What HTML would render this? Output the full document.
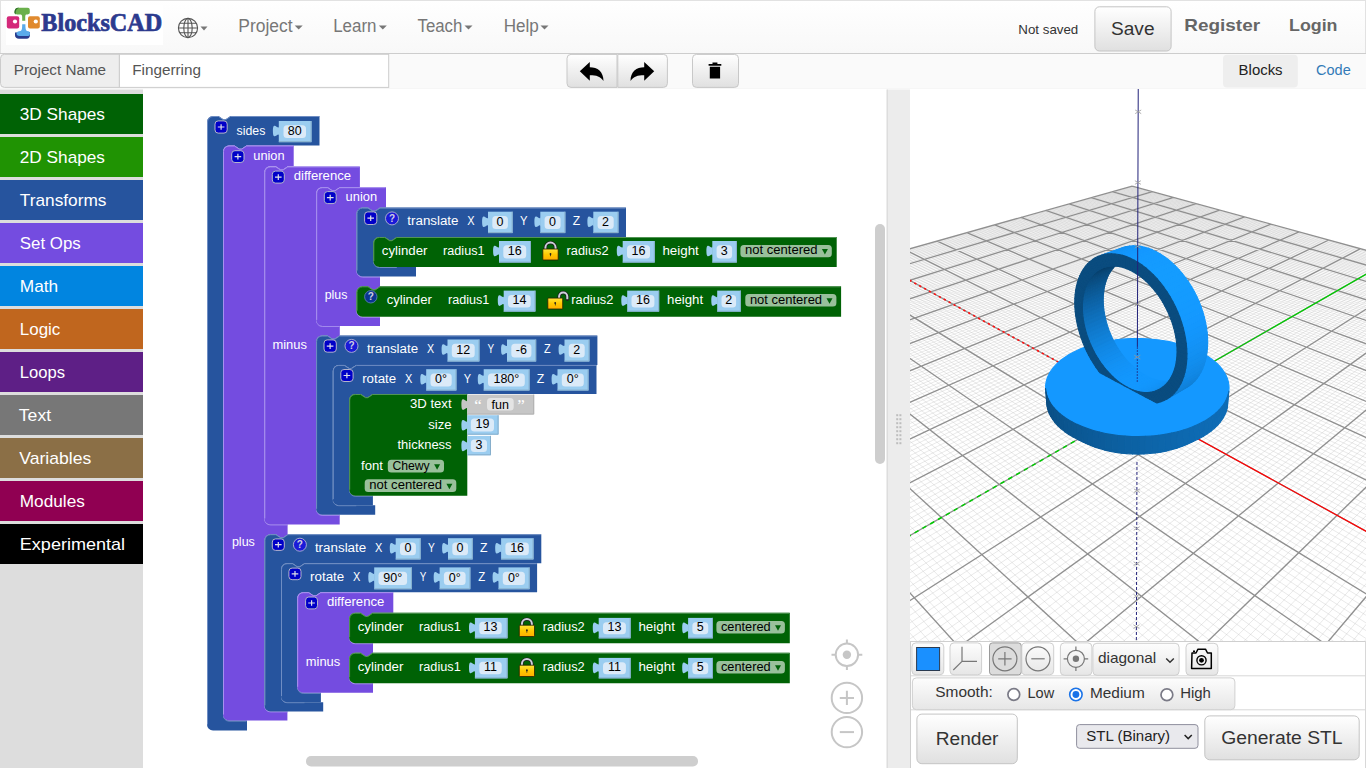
<!DOCTYPE html>
<html><head><meta charset="utf-8"><title>BlocksCAD</title>
<style>
html,body{margin:0;padding:0;width:1366px;height:768px;overflow:hidden;background:#fff;}
svg{display:block;font-family:"Liberation Sans",sans-serif;}
</style></head><body>
<svg width="1366" height="768" viewBox="0 0 1366 768">
<defs>
<linearGradient id="hdr" x1="0" y1="0" x2="0" y2="1"><stop offset="0" stop-color="#ffffff"/><stop offset="1" stop-color="#f8f8f8"/></linearGradient>
<linearGradient id="btn" x1="0" y1="0" x2="0" y2="1"><stop offset="0" stop-color="#ffffff"/><stop offset="1" stop-color="#e0e0e0"/></linearGradient>
<linearGradient id="btn2" x1="0" y1="0" x2="0" y2="1"><stop offset="0" stop-color="#fdfdfd"/><stop offset="1" stop-color="#e6e6e6"/></linearGradient>
<linearGradient id="gold" x1="0" y1="0" x2="0" y2="1"><stop offset="0" stop-color="#ffe63a"/><stop offset="0.5" stop-color="#ffc800"/><stop offset="1" stop-color="#ffae00"/></linearGradient>
</defs>

<rect x="0" y="0" width="1366" height="53" fill="url(#hdr)"/>
<rect x="0" y="0" width="1366" height="1" fill="#e2e2e2"/>
<rect x="0" y="0" width="1" height="53" fill="#e2e2e2"/>
<rect x="1365" y="0" width="1" height="53" fill="#e2e2e2"/>
<rect x="0" y="53" width="1366" height="1" fill="#cdcdcd"/>
<rect x="6" y="5" width="157" height="40" fill="#fff"/>
<path d="M14.5,13 C14.5,9 16,7.8 19,7.8 H27.5 C29.5,7.8 29.8,9 29.8,11 V12.5 C29.8,14 28.5,14.5 26,14.5 C25,15 25.3,17 25.3,20.8 H22.2 C22.2,17 22.5,15 21,14.5 C17,14.5 14.5,14.5 14.5,13 Z" fill="#6ab04c"/>
<path d="M14.5,13 C14.5,9 16,7.8 19,7.8 L17,9 C15.8,10 15.6,12 15.8,14 Z" fill="#2d6b2a"/>
<rect x="6.8" y="16.3" width="12.4" height="12.3" rx="2" fill="#d4297a"/><circle cx="15" cy="21.5" r="2.1" fill="#fff"/>
<rect x="28" y="16.3" width="11.8" height="12.3" rx="2" fill="#e08a2e"/><circle cx="35.8" cy="21.5" r="2.1" fill="#fff"/>
<path d="M15,32.5 V35 C15,37.5 16.5,38.7 19,38.7 H26.5 C29,38.7 30,37 30,34.5 V32 Z" fill="#283c8e"/>
<path d="M22.2,24.2 H25.4 C25.4,28 25.6,30.5 27,31 C29.5,31.3 30,32 30,33.5 C30,35.5 29,36 27,36 H19.5 C17.5,36 16.5,35 16.5,33.5 C16.5,31.8 18,31.2 20.5,31 C22,30.5 22.2,28 22.2,24.2 Z" fill="#5aabeb"/>
<text stroke="#2c3a8e" stroke-width="0.7" x="41.30" y="30.9" font-size="24.5" fill="#2c3a8e" font-weight="bold" font-family="Liberation Serif" textLength="120.91" lengthAdjust="spacingAndGlyphs">BlocksCAD</text>
<g stroke="#555" stroke-width="1.1" fill="none"><circle cx="188" cy="28" r="9.6"/><ellipse cx="188" cy="28" rx="4.2" ry="9.6"/><path d="M188,18.4V37.6M178.4,28H197.6M179.8,23.2H196.2M179.8,32.8H196.2"/></g>
<path d="M200.5,26.5H207.5L204.0,30.5Z" fill="#777"/>
<text x="238.30" y="32.0" font-size="17.5" fill="#777" font-weight="normal" font-family="Liberation Sans" textLength="54.24" lengthAdjust="spacingAndGlyphs">Project</text>
<path d="M294.7,25.5H302.7L298.7,29.5Z" fill="#777"/>
<text x="333.20" y="32.0" font-size="17.5" fill="#777" font-weight="normal" font-family="Liberation Sans" textLength="43.36" lengthAdjust="spacingAndGlyphs">Learn</text>
<path d="M378.8,25.5H386.8L382.8,29.5Z" fill="#777"/>
<text x="417.50" y="32.0" font-size="17.5" fill="#777" font-weight="normal" font-family="Liberation Sans" textLength="44.88" lengthAdjust="spacingAndGlyphs">Teach</text>
<path d="M464.5,25.5H472.5L468.5,29.5Z" fill="#777"/>
<text x="503.70" y="32.0" font-size="17.5" fill="#777" font-weight="normal" font-family="Liberation Sans" textLength="35.13" lengthAdjust="spacingAndGlyphs">Help</text>
<path d="M540.5,25.5H548.5L544.5,29.5Z" fill="#777"/>
<text x="1018.30" y="34.0" font-size="13.3" fill="#333" font-weight="normal" font-family="Liberation Sans" textLength="59.97" lengthAdjust="spacingAndGlyphs">Not saved</text>
<rect x="1094.9" y="6.8" width="76.2" height="44.2" rx="4.5" fill="url(#btn)" stroke="#c4c4c4" stroke-width="1"/>
<text x="1111.00" y="35.0" font-size="18.3" fill="#333" font-weight="normal" font-family="Liberation Sans" textLength="43.49" lengthAdjust="spacingAndGlyphs">Save</text>
<text x="1184.30" y="30.8" font-size="17" fill="#666" font-weight="bold" font-family="Liberation Sans" textLength="75.73" lengthAdjust="spacingAndGlyphs">Register</text>
<text x="1289.00" y="30.8" font-size="17" fill="#666" font-weight="bold" font-family="Liberation Sans" textLength="48.52" lengthAdjust="spacingAndGlyphs">Login</text>
<rect x="0" y="54" width="1366" height="35" fill="#fafafa"/>
<rect x="0" y="88" width="1366" height="1" fill="#f6f6f6"/>
<path d="M119.4,54.3 H4.5 A4,4 0 0,0 0.5,58.3 V83.4 A4,4 0 0,0 4.5,87.4 H119.4 Z" fill="#eee" stroke="#ccc" stroke-width="1"/>
<text x="13.80" y="74.8" font-size="14" fill="#555" font-weight="normal" font-family="Liberation Sans" textLength="92.27" lengthAdjust="spacingAndGlyphs">Project Name</text>
<rect x="119.4" y="54.3" width="269.3" height="33.1" fill="#fff" stroke="#ccc" stroke-width="1"/>
<text x="132.20" y="74.8" font-size="14" fill="#555" font-weight="normal" font-family="Liberation Sans" textLength="68.83" lengthAdjust="spacingAndGlyphs">Fingerring</text>
<path d="M571,54.4 H617 V87.4 H571 A4,4 0 0,1 567,83.4 V58.4 A4,4 0 0,1 571,54.4 Z" fill="url(#btn)" stroke="#c8c8c8" stroke-width="1"/>
<path d="M617.8,54.4 H663.4 A4,4 0 0,1 667.4,58.4 V83.4 A4,4 0 0,1 663.4,87.4 H617.8 Z" fill="url(#btn)" stroke="#c8c8c8" stroke-width="1"/>
<rect x="692.5" y="54.4" width="46" height="33" rx="4" fill="url(#btn)" stroke="#c8c8c8" stroke-width="1"/>
<path d="M579.8,71.2 L589.8,62 V67.2 C597.5,67.2 603.5,71.5 603.5,81 C600.5,76.5 596.5,75.3 589.8,75.3 V80.8 Z" fill="#000"/>
<path d="M654.2,71.2 L644.2,62 V67.2 C636.5,67.2 630.5,71.5 630.5,81 C633.5,76.5 637.5,75.3 644.2,75.3 V80.8 Z" fill="#000"/>
<path d="M708.6,64 H721.3 V65.8 H708.6 Z M712.5,62.6 H717.4 V64 H712.5 Z M709.8,66.8 H720.1 V78.5 H709.8 Z" fill="#000"/>
<rect x="1223" y="54.7" width="74.8" height="32.8" rx="4" fill="#eee"/>
<text x="1238.60" y="74.7" font-size="14.2" fill="#222" font-weight="normal" font-family="Liberation Sans" textLength="44.01" lengthAdjust="spacingAndGlyphs">Blocks</text>
<text x="1316.00" y="74.7" font-size="14.2" fill="#337ab7" font-weight="normal" font-family="Liberation Sans" textLength="34.71" lengthAdjust="spacingAndGlyphs">Code</text>
<rect x="0" y="89.5" width="143" height="678.5" fill="#ddd"/>
<rect x="0" y="94" width="143" height="40" fill="#006205"/>
<text x="19.80" y="119.6" font-size="17" fill="#fff" font-weight="normal" font-family="Liberation Sans" textLength="85.16" lengthAdjust="spacingAndGlyphs">3D Shapes</text>
<rect x="0" y="137" width="143" height="40" fill="#209303"/>
<text x="19.80" y="162.6" font-size="17" fill="#fff" font-weight="normal" font-family="Liberation Sans" textLength="85.16" lengthAdjust="spacingAndGlyphs">2D Shapes</text>
<rect x="0" y="180" width="143" height="40" fill="#26549e"/>
<text x="19.80" y="205.6" font-size="17" fill="#fff" font-weight="normal" font-family="Liberation Sans" textLength="86.69" lengthAdjust="spacingAndGlyphs">Transforms</text>
<rect x="0" y="223" width="143" height="40" fill="#744ce0"/>
<text x="19.80" y="248.6" font-size="17" fill="#fff" font-weight="normal" font-family="Liberation Sans" textLength="60.96" lengthAdjust="spacingAndGlyphs">Set Ops</text>
<rect x="0" y="266" width="143" height="40" fill="#0185e0"/>
<text x="19.80" y="291.6" font-size="17" fill="#fff" font-weight="normal" font-family="Liberation Sans" textLength="38.37" lengthAdjust="spacingAndGlyphs">Math</text>
<rect x="0" y="309" width="143" height="40" fill="#c0661e"/>
<text x="19.80" y="334.6" font-size="17" fill="#fff" font-weight="normal" font-family="Liberation Sans" textLength="40.51" lengthAdjust="spacingAndGlyphs">Logic</text>
<rect x="0" y="352" width="143" height="40" fill="#5e1f86"/>
<text x="19.80" y="377.6" font-size="17" fill="#fff" font-weight="normal" font-family="Liberation Sans" textLength="45.19" lengthAdjust="spacingAndGlyphs">Loops</text>
<rect x="0" y="395" width="143" height="40" fill="#777777"/>
<text x="18.80" y="420.6" font-size="17" fill="#fff" font-weight="normal" font-family="Liberation Sans" textLength="32.28" lengthAdjust="spacingAndGlyphs">Text</text>
<rect x="0" y="438" width="143" height="40" fill="#8b6f46"/>
<text x="19.30" y="463.6" font-size="17" fill="#fff" font-weight="normal" font-family="Liberation Sans" textLength="71.90" lengthAdjust="spacingAndGlyphs">Variables</text>
<rect x="0" y="481" width="143" height="40" fill="#900052"/>
<text x="19.80" y="506.6" font-size="17" fill="#fff" font-weight="normal" font-family="Liberation Sans" textLength="65.00" lengthAdjust="spacingAndGlyphs">Modules</text>
<rect x="0" y="524" width="143" height="40" fill="#000000"/>
<text x="19.80" y="549.6" font-size="17" fill="#fff" font-weight="normal" font-family="Liberation Sans" textLength="105.32" lengthAdjust="spacingAndGlyphs">Experimental</text>
<rect x="143" y="89.5" width="744" height="678.5" fill="#fff"/>
<path d="M207.0,122.0 A6.0,6.0 0 0,1 213.0,116.0 H218.5 l4.8,3.2 2.4,0 4.8,-3.2 H319.5 V145.5 H246.5 l-4.8,3.2 -2.4,0 -4.8,-3.2 H229.0 A6.0,6.0 0 0,0 223.0,151.5 V714.6 A6.0,6.0 0 0,0 229.0,720.6 H247.0 V730.6 H213.0 A6.0,6.0 0 0,1 207.0,724.6 Z" fill="#26549e"/>
<path d="M207.5,724.6 V122.0 A5.5,5.5 0 0,1 213.0,116.5 H218.5 l4.8,3.2 2.4,0 4.8,-3.2 H319.0" fill="none" stroke="#7893c6" stroke-width="1" opacity="0.9"/>
<path d="M223.5,714.6 A5.5,5.5 0 0,0 229.0,721.1 H246.5" fill="none" stroke="#7893c6" stroke-width="1" opacity="0.9"/>
<rect x="215.0" y="120.9" width="12.2" height="12.2" rx="3.2" fill="#0000c8" stroke="#b4b4cc" stroke-width="1"/>
<path d="M217.8,127.0H224.4M221.1,124.2V129.8" stroke="#e0e0e8" stroke-width="1.2"/>
<text x="236.60" y="135.0" font-size="12" fill="#fff" textLength="28.79" lengthAdjust="spacingAndGlyphs">sides</text>
<path d="M279.3,137.0 c0,-8 -6.4,6.4 -6.4,-6 s6.4,2 6.4,-6 Z" fill="#9bcdf0"/>
<rect x="278.8" y="121.0" width="32.8" height="21.2" fill="#9bcdf0"/>
<path d="M278.8,141.7H311.1V121.0" fill="none" stroke="#86aecb" stroke-width="1"/>
<rect x="283.5" y="125.2" width="22.5" height="12.7" rx="3.5" fill="#dbeaf8"/>
<text x="294.8" y="134.5" font-size="12.5" fill="#000" text-anchor="middle">80</text>
<path d="M223.0,151.5 A6.0,6.0 0 0,1 229.0,145.5 H234.5 l4.8,3.2 2.4,0 4.8,-3.2 H293.7 V166.3 H287.8 l-4.8,3.2 -2.4,0 -4.8,-3.2 H270.3 A6.0,6.0 0 0,0 264.3,172.3 V518.4 A6.0,6.0 0 0,0 270.3,524.4 H287.6 V534.2 H287.9 l-4.8,3.2 -2.4,0 -4.8,-3.2 H270.4 A6.0,6.0 0 0,0 264.4,540.2 V705.4 A6.0,6.0 0 0,0 270.4,711.4 H287.4 V720.6 H229.0 A6.0,6.0 0 0,1 223.0,714.6 Z" fill="#744ce0"/>
<path d="M223.5,714.6 V151.5 A5.5,5.5 0 0,1 229.0,146.0 H234.5 l4.8,3.2 2.4,0 4.8,-3.2 H293.2" fill="none" stroke="#ad98f0" stroke-width="1" opacity="0.9"/>
<path d="M264.8,518.4 A5.5,5.5 0 0,0 270.3,524.9 H287.8" fill="none" stroke="#ad98f0" stroke-width="1" opacity="0.9"/>
<path d="M264.9,705.4 A5.5,5.5 0 0,0 270.4,711.9 H287.9" fill="none" stroke="#ad98f0" stroke-width="1" opacity="0.9"/>
<rect x="231.7" y="150.7" width="12.3" height="11.8" rx="3.2" fill="#0000c8" stroke="#b4b4cc" stroke-width="1"/>
<path d="M234.6,156.6H241.2M237.9,153.8V159.4" stroke="#e0e0e8" stroke-width="1.2"/>
<text x="253.30" y="159.8" font-size="12" fill="#fff" textLength="31.32" lengthAdjust="spacingAndGlyphs">union</text>
<text x="231.90" y="546.3" font-size="12" fill="#fff" textLength="22.99" lengthAdjust="spacingAndGlyphs">plus</text>
<path d="M264.3,172.4 A6.0,6.0 0 0,1 270.3,166.4 H275.8 l4.8,3.2 2.4,0 4.8,-3.2 H359.9 V187.2 H339.7 l-4.8,3.2 -2.4,0 -4.8,-3.2 H322.2 A6.0,6.0 0 0,0 316.2,193.2 V319.9 A6.0,6.0 0 0,0 322.2,325.9 H339.8 V335.5 H339.6 l-4.8,3.2 -2.4,0 -4.8,-3.2 H322.1 A6.0,6.0 0 0,0 316.1,341.5 V508.8 A6.0,6.0 0 0,0 322.1,514.8 H339.7 V524.4 H270.3 A6.0,6.0 0 0,1 264.3,518.4 Z" fill="#744ce0"/>
<path d="M264.8,518.4 V172.4 A5.5,5.5 0 0,1 270.3,166.9 H275.8 l4.8,3.2 2.4,0 4.8,-3.2 H359.4" fill="none" stroke="#ad98f0" stroke-width="1" opacity="0.9"/>
<path d="M316.7,319.9 A5.5,5.5 0 0,0 322.2,326.4 H339.7" fill="none" stroke="#ad98f0" stroke-width="1" opacity="0.9"/>
<path d="M316.6,508.8 A5.5,5.5 0 0,0 322.1,515.3 H339.6" fill="none" stroke="#ad98f0" stroke-width="1" opacity="0.9"/>
<rect x="272.3" y="171.1" width="12.0" height="12.0" rx="3.2" fill="#0000c8" stroke="#b4b4cc" stroke-width="1"/>
<path d="M275.0,177.1H281.6M278.3,174.3V179.9" stroke="#e0e0e8" stroke-width="1.2"/>
<text x="293.70" y="179.8" font-size="12" fill="#fff" textLength="57.38" lengthAdjust="spacingAndGlyphs">difference</text>
<text x="272.40" y="348.7" font-size="12" fill="#fff" textLength="34.47" lengthAdjust="spacingAndGlyphs">minus</text>
<path d="M316.2,193.2 A6.0,6.0 0 0,1 322.2,187.2 H327.7 l4.8,3.2 2.4,0 4.8,-3.2 H386.0 V207.6 H380.0 l-4.8,3.2 -2.4,0 -4.8,-3.2 H362.5 A6.0,6.0 0 0,0 356.5,213.6 V270.6 A6.0,6.0 0 0,0 362.5,276.6 H380.0 V286.3 H380.0 l-4.8,3.2 -2.4,0 -4.8,-3.2 H362.5 A6.0,6.0 0 0,0 356.5,292.3 V310.8 A6.0,6.0 0 0,0 362.5,316.8 H380.0 V325.9 H322.2 A6.0,6.0 0 0,1 316.2,319.9 Z" fill="#744ce0"/>
<path d="M316.7,319.9 V193.2 A5.5,5.5 0 0,1 322.2,187.7 H327.7 l4.8,3.2 2.4,0 4.8,-3.2 H385.5" fill="none" stroke="#ad98f0" stroke-width="1" opacity="0.9"/>
<path d="M357.0,270.6 A5.5,5.5 0 0,0 362.5,277.1 H380.0" fill="none" stroke="#ad98f0" stroke-width="1" opacity="0.9"/>
<path d="M357.0,310.8 A5.5,5.5 0 0,0 362.5,317.3 H380.0" fill="none" stroke="#ad98f0" stroke-width="1" opacity="0.9"/>
<rect x="324.3" y="191.6" width="11.9" height="12.0" rx="3.2" fill="#0000c8" stroke="#b4b4cc" stroke-width="1"/>
<path d="M326.9,197.6H333.6M330.2,194.8V200.4" stroke="#e0e0e8" stroke-width="1.2"/>
<text x="345.60" y="200.8" font-size="12" fill="#fff" textLength="31.52" lengthAdjust="spacingAndGlyphs">union</text>
<text x="324.70" y="298.7" font-size="12" fill="#fff" textLength="22.69" lengthAdjust="spacingAndGlyphs">plus</text>
<path d="M356.5,213.6 A6.0,6.0 0 0,1 362.5,207.6 H368.0 l4.8,3.2 2.4,0 4.8,-3.2 H626.0 V237.0 H396.8 l-4.8,3.2 -2.4,0 -4.8,-3.2 H379.3 A6.0,6.0 0 0,0 373.3,243.0 V261.0 A6.0,6.0 0 0,0 379.3,267.0 H416.0 V276.6 H362.5 A6.0,6.0 0 0,1 356.5,270.6 Z" fill="#26549e"/>
<path d="M357.0,270.6 V213.6 A5.5,5.5 0 0,1 362.5,208.1 H368.0 l4.8,3.2 2.4,0 4.8,-3.2 H625.5" fill="none" stroke="#7893c6" stroke-width="1" opacity="0.9"/>
<path d="M373.8,261.0 A5.5,5.5 0 0,0 379.3,267.5 H396.8" fill="none" stroke="#7893c6" stroke-width="1" opacity="0.9"/>
<rect x="364.6" y="211.9" width="12.2" height="12.6" rx="3.2" fill="#0000c8" stroke="#b4b4cc" stroke-width="1"/>
<path d="M367.4,218.2H374.0M370.7,215.4V221.0" stroke="#e0e0e8" stroke-width="1.2"/>
<circle cx="392.0" cy="218.4" r="6.5" fill="#1a1ad8" stroke="#b4b4d4" stroke-width="0.9"/>
<text x="392.0" y="221.9" font-size="10" font-weight="bold" fill="#d0d0e0" text-anchor="middle">?</text>
<text x="407.30" y="225.4" font-size="12" fill="#fff" textLength="51.21" lengthAdjust="spacingAndGlyphs">translate</text>
<text x="467.30" y="225.4" font-size="12" fill="#fff" textLength="7.32" lengthAdjust="spacingAndGlyphs">X</text>
<path d="M488.5,227.7 c0,-8 -6.4,6.4 -6.4,-6 s6.4,2 6.4,-6 Z" fill="#9bcdf0"/>
<rect x="488.0" y="211.7" width="24.7" height="21.4" fill="#9bcdf0"/>
<path d="M488.0,232.6H512.2V211.7" fill="none" stroke="#86aecb" stroke-width="1"/>
<rect x="492.3" y="216.0" width="15.6" height="12.9" rx="3.5" fill="#dbeaf8"/>
<text x="500.1" y="225.5" font-size="12.5" fill="#000" text-anchor="middle">0</text>
<text x="520.00" y="225.4" font-size="12" fill="#fff" textLength="7.52" lengthAdjust="spacingAndGlyphs">Y</text>
<path d="M540.8,227.7 c0,-8 -6.4,6.4 -6.4,-6 s6.4,2 6.4,-6 Z" fill="#9bcdf0"/>
<rect x="540.3" y="211.7" width="25.1" height="21.4" fill="#9bcdf0"/>
<path d="M540.3,232.6H564.9V211.7" fill="none" stroke="#86aecb" stroke-width="1"/>
<rect x="544.6" y="216.0" width="16.0" height="12.9" rx="3.5" fill="#dbeaf8"/>
<text x="552.6" y="225.5" font-size="12.5" fill="#000" text-anchor="middle">0</text>
<text x="572.80" y="225.4" font-size="12" fill="#fff" textLength="7.41" lengthAdjust="spacingAndGlyphs">Z</text>
<path d="M593.8,227.7 c0,-8 -6.4,6.4 -6.4,-6 s6.4,2 6.4,-6 Z" fill="#9bcdf0"/>
<rect x="593.3" y="211.7" width="25.2" height="21.4" fill="#9bcdf0"/>
<path d="M593.3,232.6H618.0V211.7" fill="none" stroke="#86aecb" stroke-width="1"/>
<rect x="597.6" y="216.0" width="16.1" height="12.9" rx="3.5" fill="#dbeaf8"/>
<text x="605.6" y="225.5" font-size="12.5" fill="#000" text-anchor="middle">2</text>
<path d="M373.3,243.0 A6.0,6.0 0 0,1 379.3,237.0 H384.8 l4.8,3.2 2.4,0 4.8,-3.2 H836.7 V267.0 H379.3 A6.0,6.0 0 0,1 373.3,261.0 Z" fill="#006205"/>
<path d="M373.8,261.0 V243.0 A5.5,5.5 0 0,1 379.3,237.5 H384.8 l4.8,3.2 2.4,0 4.8,-3.2 H836.2" fill="none" stroke="#5b9a5e" stroke-width="1" opacity="0.9"/>
<text x="381.80" y="254.9" font-size="12" fill="#fff" textLength="45.61" lengthAdjust="spacingAndGlyphs">cylinder</text>
<text x="443.10" y="254.9" font-size="12" fill="#fff" textLength="41.40" lengthAdjust="spacingAndGlyphs">radius1</text>
<path d="M499.5,257.0 c0,-8 -6.4,6.4 -6.4,-6 s6.4,2 6.4,-6 Z" fill="#9bcdf0"/>
<rect x="499.0" y="241.0" width="32.0" height="21.6" fill="#9bcdf0"/>
<path d="M499.0,262.1H530.5V241.0" fill="none" stroke="#86aecb" stroke-width="1"/>
<rect x="503.3" y="245.3" width="22.9" height="13.1" rx="3.5" fill="#dbeaf8"/>
<text x="514.8" y="255.0" font-size="12.5" fill="#000" text-anchor="middle">16</text>
<path d="M545.4,250.0 V247.7 A5.1,5.1 0 0,1 555.6,247.7 V250.0" fill="none" stroke="#1e1e1e" stroke-width="3.4" stroke-linecap="round"/>
<path d="M545.4,250.0 V247.7 A5.1,5.1 0 0,1 555.6,247.7 V250.0" fill="none" stroke="#cfd0dc" stroke-width="2"/>
<rect x="542.8" y="249.0" width="15.4" height="11.0" rx="0.8" fill="url(#gold)" stroke="#2a1e00" stroke-width="0.8"/>
<circle cx="550.5" cy="253.9" r="0.9" fill="#222"/><path d="M550.0,254.0h1l-0.2,2.3h-0.6z" fill="#222"/>
<text x="566.60" y="254.9" font-size="12" fill="#fff" textLength="41.90" lengthAdjust="spacingAndGlyphs">radius2</text>
<path d="M623.2,257.0 c0,-8 -6.4,6.4 -6.4,-6 s6.4,2 6.4,-6 Z" fill="#9bcdf0"/>
<rect x="622.7" y="241.0" width="32.1" height="21.6" fill="#9bcdf0"/>
<path d="M622.7,262.1H654.3V241.0" fill="none" stroke="#86aecb" stroke-width="1"/>
<rect x="627.0" y="245.3" width="23.0" height="13.1" rx="3.5" fill="#dbeaf8"/>
<text x="638.5" y="255.0" font-size="12.5" fill="#000" text-anchor="middle">16</text>
<text x="662.40" y="254.9" font-size="12" fill="#fff" textLength="36.40" lengthAdjust="spacingAndGlyphs">height</text>
<path d="M712.8,257.0 c0,-8 -6.4,6.4 -6.4,-6 s6.4,2 6.4,-6 Z" fill="#9bcdf0"/>
<rect x="712.3" y="241.0" width="24.6" height="21.6" fill="#9bcdf0"/>
<path d="M712.3,262.1H736.4V241.0" fill="none" stroke="#86aecb" stroke-width="1"/>
<rect x="716.6" y="245.3" width="15.5" height="13.1" rx="3.5" fill="#dbeaf8"/>
<text x="724.3" y="255.0" font-size="12.5" fill="#000" text-anchor="middle">3</text>
<rect x="740.4" y="245.0" width="91.4" height="12.2" rx="3.5" fill="#99c09b"/>
<text x="745.00" y="254.3" font-size="12.5" fill="#000" textLength="72.50" lengthAdjust="spacingAndGlyphs">not centered</text>
<path d="M821.9,249.1H827.9L824.9,254.6Z" fill="#00620a"/>
<path d="M356.5,292.3 A6.0,6.0 0 0,1 362.5,286.3 H368.0 l4.8,3.2 2.4,0 4.8,-3.2 H841.1 V316.7 H362.5 A6.0,6.0 0 0,1 356.5,310.7 Z" fill="#006205"/>
<path d="M357.0,310.7 V292.3 A5.5,5.5 0 0,1 362.5,286.8 H368.0 l4.8,3.2 2.4,0 4.8,-3.2 H840.6" fill="none" stroke="#5b9a5e" stroke-width="1" opacity="0.9"/>
<circle cx="370.8" cy="296.8" r="6.2" fill="#0a3592" stroke="#5a7fb0" stroke-width="0.9"/>
<text x="370.8" y="300.3" font-size="10" font-weight="bold" fill="#d0d0e0" text-anchor="middle">?</text>
<text x="386.70" y="304.3" font-size="12" fill="#fff" textLength="45.11" lengthAdjust="spacingAndGlyphs">cylinder</text>
<text x="448.00" y="304.3" font-size="12" fill="#fff" textLength="41.30" lengthAdjust="spacingAndGlyphs">radius1</text>
<path d="M504.2,306.6 c0,-8 -6.4,6.4 -6.4,-6 s6.4,2 6.4,-6 Z" fill="#9bcdf0"/>
<rect x="503.7" y="290.6" width="31.8" height="21.1" fill="#9bcdf0"/>
<path d="M503.7,311.2H535.0V290.6" fill="none" stroke="#86aecb" stroke-width="1"/>
<rect x="508.0" y="294.9" width="22.7" height="12.6" rx="3.5" fill="#dbeaf8"/>
<text x="519.4" y="304.1" font-size="12.5" fill="#000" text-anchor="middle">14</text>
<path d="M559.1,299.1 V296.6 A4.1,4.1 0 0,1 567.3,296.6 V299.2" fill="none" stroke="#1e1e1e" stroke-width="3.4" stroke-linecap="round"/>
<path d="M559.1,299.1 V296.6 A4.1,4.1 0 0,1 567.3,296.6 V299.2" fill="none" stroke="#cfd0dc" stroke-width="2"/>
<rect x="547.8" y="298.1" width="14.9" height="10.9" rx="0.8" fill="url(#gold)" stroke="#2a1e00" stroke-width="0.8"/>
<circle cx="555.2" cy="302.9" r="0.9" fill="#222"/><path d="M554.8,303.1h1l-0.2,2.3h-0.6z" fill="#222"/>
<text x="571.30" y="304.3" font-size="12" fill="#fff" textLength="42.00" lengthAdjust="spacingAndGlyphs">radius2</text>
<path d="M627.7,306.6 c0,-8 -6.4,6.4 -6.4,-6 s6.4,2 6.4,-6 Z" fill="#9bcdf0"/>
<rect x="627.2" y="290.6" width="32.0" height="21.1" fill="#9bcdf0"/>
<path d="M627.2,311.2H658.7V290.6" fill="none" stroke="#86aecb" stroke-width="1"/>
<rect x="631.5" y="294.9" width="22.9" height="12.6" rx="3.5" fill="#dbeaf8"/>
<text x="643.0" y="304.1" font-size="12.5" fill="#000" text-anchor="middle">16</text>
<text x="667.10" y="304.3" font-size="12" fill="#fff" textLength="36.00" lengthAdjust="spacingAndGlyphs">height</text>
<path d="M717.7,306.6 c0,-8 -6.4,6.4 -6.4,-6 s6.4,2 6.4,-6 Z" fill="#9bcdf0"/>
<rect x="717.2" y="290.6" width="23.7" height="21.1" fill="#9bcdf0"/>
<path d="M717.2,311.2H740.4V290.6" fill="none" stroke="#86aecb" stroke-width="1"/>
<rect x="721.5" y="294.9" width="14.6" height="12.6" rx="3.5" fill="#dbeaf8"/>
<text x="728.8" y="304.1" font-size="12.5" fill="#000" text-anchor="middle">2</text>
<rect x="745.3" y="294.1" width="91.1" height="12.4" rx="3.5" fill="#99c09b"/>
<text x="749.90" y="303.6" font-size="12.5" fill="#000" textLength="72.20" lengthAdjust="spacingAndGlyphs">not centered</text>
<path d="M826.5,298.3H832.5L829.5,303.8Z" fill="#00620a"/>
<path d="M316.1,341.5 A6.0,6.0 0 0,1 322.1,335.5 H327.6 l4.8,3.2 2.4,0 4.8,-3.2 H597.4 V364.9 H356.3 l-4.8,3.2 -2.4,0 -4.8,-3.2 H338.8 A6.0,6.0 0 0,0 332.8,370.9 V499.2 A6.0,6.0 0 0,0 338.8,505.2 H375.2 V514.8 H322.1 A6.0,6.0 0 0,1 316.1,508.8 Z" fill="#26549e"/>
<path d="M316.6,508.8 V341.5 A5.5,5.5 0 0,1 322.1,336.0 H327.6 l4.8,3.2 2.4,0 4.8,-3.2 H596.9" fill="none" stroke="#7893c6" stroke-width="1" opacity="0.9"/>
<path d="M333.3,499.2 A5.5,5.5 0 0,0 338.8,505.7 H356.3" fill="none" stroke="#7893c6" stroke-width="1" opacity="0.9"/>
<rect x="324.0" y="339.9" width="12.3" height="12.3" rx="3.2" fill="#0000c8" stroke="#b4b4cc" stroke-width="1"/>
<path d="M326.8,346.1H333.4M330.1,343.2V348.9" stroke="#e0e0e8" stroke-width="1.2"/>
<circle cx="351.5" cy="345.9" r="6.5" fill="#1a1ad8" stroke="#b4b4d4" stroke-width="0.9"/>
<text x="351.5" y="349.4" font-size="10" font-weight="bold" fill="#d0d0e0" text-anchor="middle">?</text>
<text x="366.90" y="353.1" font-size="12" fill="#fff" textLength="51.21" lengthAdjust="spacingAndGlyphs">translate</text>
<text x="426.90" y="353.1" font-size="12" fill="#fff" textLength="7.12" lengthAdjust="spacingAndGlyphs">X</text>
<path d="M448.0,355.5 c0,-8 -6.4,6.4 -6.4,-6 s6.4,2 6.4,-6 Z" fill="#9bcdf0"/>
<rect x="447.5" y="339.5" width="32.0" height="22.1" fill="#9bcdf0"/>
<path d="M447.5,361.1H479.0V339.5" fill="none" stroke="#86aecb" stroke-width="1"/>
<rect x="451.8" y="343.8" width="22.9" height="13.6" rx="3.5" fill="#dbeaf8"/>
<text x="463.2" y="354.0" font-size="12.5" fill="#000" text-anchor="middle">12</text>
<text x="487.40" y="353.1" font-size="12" fill="#fff" textLength="6.62" lengthAdjust="spacingAndGlyphs">Y</text>
<path d="M507.5,355.5 c0,-8 -6.4,6.4 -6.4,-6 s6.4,2 6.4,-6 Z" fill="#9bcdf0"/>
<rect x="507.0" y="339.5" width="29.2" height="22.1" fill="#9bcdf0"/>
<path d="M507.0,361.1H535.7V339.5" fill="none" stroke="#86aecb" stroke-width="1"/>
<rect x="511.3" y="343.8" width="20.1" height="13.6" rx="3.5" fill="#dbeaf8"/>
<text x="521.4" y="354.0" font-size="12.5" fill="#000" text-anchor="middle">-6</text>
<text x="544.00" y="353.1" font-size="12" fill="#fff" textLength="6.71" lengthAdjust="spacingAndGlyphs">Z</text>
<path d="M565.0,355.5 c0,-8 -6.4,6.4 -6.4,-6 s6.4,2 6.4,-6 Z" fill="#9bcdf0"/>
<rect x="564.5" y="339.5" width="25.0" height="22.1" fill="#9bcdf0"/>
<path d="M564.5,361.1H589.0V339.5" fill="none" stroke="#86aecb" stroke-width="1"/>
<rect x="568.8" y="343.8" width="15.9" height="13.6" rx="3.5" fill="#dbeaf8"/>
<text x="576.8" y="354.0" font-size="12.5" fill="#000" text-anchor="middle">2</text>
<path d="M332.8,370.9 A6.0,6.0 0 0,1 338.8,364.9 H344.3 l4.8,3.2 2.4,0 4.8,-3.2 H596.5 V394.0 H372.7 l-4.8,3.2 -2.4,0 -4.8,-3.2 H355.2 A6.0,6.0 0 0,0 349.2,400.0 V489.7 A6.0,6.0 0 0,0 355.2,495.7 H372.9 V505.2 H338.8 A6.0,6.0 0 0,1 332.8,499.2 Z" fill="#26549e"/>
<path d="M333.3,499.2 V370.9 A5.5,5.5 0 0,1 338.8,365.4 H344.3 l4.8,3.2 2.4,0 4.8,-3.2 H596.0" fill="none" stroke="#7893c6" stroke-width="1" opacity="0.9"/>
<path d="M349.7,489.7 A5.5,5.5 0 0,0 355.2,496.2 H372.7" fill="none" stroke="#7893c6" stroke-width="1" opacity="0.9"/>
<rect x="340.8" y="369.5" width="12.3" height="12.0" rx="3.2" fill="#0000c8" stroke="#b4b4cc" stroke-width="1"/>
<path d="M343.6,375.5H350.2M346.9,372.7V378.3" stroke="#e0e0e8" stroke-width="1.2"/>
<text x="362.20" y="382.9" font-size="12" fill="#fff" textLength="34.03" lengthAdjust="spacingAndGlyphs">rotate</text>
<text x="405.00" y="382.9" font-size="12" fill="#fff" textLength="7.32" lengthAdjust="spacingAndGlyphs">X</text>
<path d="M426.7,385.2 c0,-8 -6.4,6.4 -6.4,-6 s6.4,2 6.4,-6 Z" fill="#9bcdf0"/>
<rect x="426.2" y="369.2" width="30.3" height="21.4" fill="#9bcdf0"/>
<path d="M426.2,390.1H456.0V369.2" fill="none" stroke="#86aecb" stroke-width="1"/>
<rect x="430.5" y="373.5" width="21.2" height="12.9" rx="3.5" fill="#dbeaf8"/>
<text x="441.1" y="383.0" font-size="12.5" fill="#000" text-anchor="middle">0°</text>
<text x="463.70" y="382.9" font-size="12" fill="#fff" textLength="7.32" lengthAdjust="spacingAndGlyphs">Y</text>
<path d="M484.2,385.2 c0,-8 -6.4,6.4 -6.4,-6 s6.4,2 6.4,-6 Z" fill="#9bcdf0"/>
<rect x="483.7" y="369.2" width="45.9" height="21.4" fill="#9bcdf0"/>
<path d="M483.7,390.1H529.1V369.2" fill="none" stroke="#86aecb" stroke-width="1"/>
<rect x="488.0" y="373.5" width="36.8" height="12.9" rx="3.5" fill="#dbeaf8"/>
<text x="506.4" y="383.0" font-size="12.5" fill="#000" text-anchor="middle">180°</text>
<text x="536.80" y="382.9" font-size="12" fill="#fff" textLength="7.51" lengthAdjust="spacingAndGlyphs">Z</text>
<path d="M558.0,385.2 c0,-8 -6.4,6.4 -6.4,-6 s6.4,2 6.4,-6 Z" fill="#9bcdf0"/>
<rect x="557.5" y="369.2" width="31.1" height="21.4" fill="#9bcdf0"/>
<path d="M557.5,390.1H588.1V369.2" fill="none" stroke="#86aecb" stroke-width="1"/>
<rect x="561.8" y="373.5" width="22.0" height="12.9" rx="3.5" fill="#dbeaf8"/>
<text x="572.8" y="383.0" font-size="12.5" fill="#000" text-anchor="middle">0°</text>
<path d="M349.2,400.0 A6.0,6.0 0 0,1 355.2,394.0 H360.7 l4.8,3.2 2.4,0 4.8,-3.2 H467.3 V495.7 H355.2 A6.0,6.0 0 0,1 349.2,489.7 Z" fill="#006205"/>
<path d="M349.7,489.7 V400.0 A5.5,5.5 0 0,1 355.2,394.5 H360.7 l4.8,3.2 2.4,0 4.8,-3.2 H466.8" fill="none" stroke="#5b9a5e" stroke-width="1" opacity="0.9"/>
<text x="410.00" y="407.9" font-size="12" fill="#fff" textLength="41.57" lengthAdjust="spacingAndGlyphs">3D text</text>
<path d="M467.8,410.6 c0,-8 -6.4,6.4 -6.4,-6 s6.4,2 6.4,-6 Z" fill="#c6c6c6"/>
<rect x="467.3" y="394.6" width="66.9" height="19.8" fill="#c6c6c6"/>
<path d="M467.3,414.1H533.7V394.6" fill="none" stroke="#b0b0b0" stroke-width="1"/>
<text x="474.3" y="411" font-size="17" fill="#fff" font-family="Liberation Serif">“</text>
<rect x="487" y="398" width="26.7" height="12.5" rx="3.5" fill="#e4e4e4"/>
<text x="500.3" y="408.6" font-size="12.5" fill="#000" text-anchor="middle">fun</text>
<text x="517.2" y="411" font-size="17" fill="#fff" font-family="Liberation Serif">”</text>
<text x="428.20" y="428.6" font-size="12" fill="#fff" textLength="23.38" lengthAdjust="spacingAndGlyphs">size</text>
<path d="M467.8,431.2 c0,-8 -6.4,6.4 -6.4,-6 s6.4,2 6.4,-6 Z" fill="#9bcdf0"/>
<rect x="467.3" y="415.2" width="31.3" height="19.5" fill="#9bcdf0"/>
<path d="M467.3,434.2H498.1V415.2" fill="none" stroke="#86aecb" stroke-width="1"/>
<rect x="470.9" y="418.5" width="23.1" height="13.0" rx="3.5" fill="#dbeaf8"/>
<text x="482.4" y="428.1" font-size="12.5" fill="#000" text-anchor="middle">19</text>
<text x="397.50" y="448.7" font-size="12" fill="#fff" textLength="54.08" lengthAdjust="spacingAndGlyphs">thickness</text>
<path d="M467.8,451.9 c0,-8 -6.4,6.4 -6.4,-6 s6.4,2 6.4,-6 Z" fill="#9bcdf0"/>
<rect x="467.3" y="435.9" width="23.7" height="19.4" fill="#9bcdf0"/>
<path d="M467.3,454.8H490.5V435.9" fill="none" stroke="#86aecb" stroke-width="1"/>
<rect x="470.9" y="439.5" width="16.1" height="12.5" rx="3.5" fill="#dbeaf8"/>
<text x="478.9" y="448.6" font-size="12.5" fill="#000" text-anchor="middle">3</text>
<text x="361.00" y="469.7" font-size="12" fill="#fff" textLength="21.87" lengthAdjust="spacingAndGlyphs">font</text>
<rect x="387.8" y="459.8" width="56.2" height="12.8" rx="3.5" fill="#99c09b"/>
<text x="392.40" y="469.7" font-size="12.5" fill="#000" textLength="37.32" lengthAdjust="spacingAndGlyphs">Chewy</text>
<path d="M434.1,464.2H440.1L437.1,469.7Z" fill="#00620a"/>
<rect x="364.7" y="479.3" width="91.6" height="12.8" rx="3.5" fill="#99c09b"/>
<text x="369.30" y="489.2" font-size="12.5" fill="#000" textLength="72.70" lengthAdjust="spacingAndGlyphs">not centered</text>
<path d="M446.4,483.7H452.4L449.4,489.2Z" fill="#00620a"/>
<path d="M264.4,540.2 A6.0,6.0 0 0,1 270.4,534.2 H275.9 l4.8,3.2 2.4,0 4.8,-3.2 H541.3 V563.2 H304.5 l-4.8,3.2 -2.4,0 -4.8,-3.2 H287.0 A6.0,6.0 0 0,0 281.0,569.2 V696.2 A6.0,6.0 0 0,0 287.0,702.2 H323.2 V711.4 H270.4 A6.0,6.0 0 0,1 264.4,705.4 Z" fill="#26549e"/>
<path d="M264.9,705.4 V540.2 A5.5,5.5 0 0,1 270.4,534.7 H275.9 l4.8,3.2 2.4,0 4.8,-3.2 H540.8" fill="none" stroke="#7893c6" stroke-width="1" opacity="0.9"/>
<path d="M281.5,696.2 A5.5,5.5 0 0,0 287.0,702.7 H304.5" fill="none" stroke="#7893c6" stroke-width="1" opacity="0.9"/>
<rect x="272.3" y="538.9" width="12.0" height="11.5" rx="3.2" fill="#0000c8" stroke="#b4b4cc" stroke-width="1"/>
<path d="M275.0,544.7H281.6M278.3,541.9V547.5" stroke="#e0e0e8" stroke-width="1.2"/>
<circle cx="299.9" cy="544.7" r="6.5" fill="#1a1ad8" stroke="#b4b4d4" stroke-width="0.9"/>
<text x="299.9" y="548.2" font-size="10" font-weight="bold" fill="#d0d0e0" text-anchor="middle">?</text>
<text x="314.90" y="551.9" font-size="12" fill="#fff" textLength="51.31" lengthAdjust="spacingAndGlyphs">translate</text>
<text x="375.00" y="551.9" font-size="12" fill="#fff" textLength="7.32" lengthAdjust="spacingAndGlyphs">X</text>
<path d="M396.2,554.2 c0,-8 -6.4,6.4 -6.4,-6 s6.4,2 6.4,-6 Z" fill="#9bcdf0"/>
<rect x="395.7" y="538.2" width="25.0" height="21.3" fill="#9bcdf0"/>
<path d="M395.7,559.0H420.2V538.2" fill="none" stroke="#86aecb" stroke-width="1"/>
<rect x="400.0" y="542.5" width="15.9" height="12.8" rx="3.5" fill="#dbeaf8"/>
<text x="407.9" y="551.9" font-size="12.5" fill="#000" text-anchor="middle">0</text>
<text x="428.00" y="551.9" font-size="12" fill="#fff" textLength="6.82" lengthAdjust="spacingAndGlyphs">Y</text>
<path d="M448.5,554.2 c0,-8 -6.4,6.4 -6.4,-6 s6.4,2 6.4,-6 Z" fill="#9bcdf0"/>
<rect x="448.0" y="538.2" width="24.8" height="21.3" fill="#9bcdf0"/>
<path d="M448.0,559.0H472.3V538.2" fill="none" stroke="#86aecb" stroke-width="1"/>
<rect x="452.3" y="542.5" width="15.7" height="12.8" rx="3.5" fill="#dbeaf8"/>
<text x="460.1" y="551.9" font-size="12.5" fill="#000" text-anchor="middle">0</text>
<text x="480.00" y="551.9" font-size="12" fill="#fff" textLength="7.51" lengthAdjust="spacingAndGlyphs">Z</text>
<path d="M501.6,554.2 c0,-8 -6.4,6.4 -6.4,-6 s6.4,2 6.4,-6 Z" fill="#9bcdf0"/>
<rect x="501.1" y="538.2" width="32.5" height="21.3" fill="#9bcdf0"/>
<path d="M501.1,559.0H533.1V538.2" fill="none" stroke="#86aecb" stroke-width="1"/>
<rect x="505.4" y="542.5" width="23.4" height="12.8" rx="3.5" fill="#dbeaf8"/>
<text x="517.1" y="551.9" font-size="12.5" fill="#000" text-anchor="middle">16</text>
<path d="M281.0,569.2 A6.0,6.0 0 0,1 287.0,563.2 H292.5 l4.8,3.2 2.4,0 4.8,-3.2 H537.1 V592.2 H320.7 l-4.8,3.2 -2.4,0 -4.8,-3.2 H303.2 A6.0,6.0 0 0,0 297.2,598.2 V686.8 A6.0,6.0 0 0,0 303.2,692.8 H320.9 V702.2 H287.0 A6.0,6.0 0 0,1 281.0,696.2 Z" fill="#26549e"/>
<path d="M281.5,696.2 V569.2 A5.5,5.5 0 0,1 287.0,563.7 H292.5 l4.8,3.2 2.4,0 4.8,-3.2 H536.6" fill="none" stroke="#7893c6" stroke-width="1" opacity="0.9"/>
<path d="M297.7,686.8 A5.5,5.5 0 0,0 303.2,693.3 H320.7" fill="none" stroke="#7893c6" stroke-width="1" opacity="0.9"/>
<rect x="288.9" y="568.1" width="12.1" height="11.6" rx="3.2" fill="#0000c8" stroke="#b4b4cc" stroke-width="1"/>
<path d="M291.7,573.9H298.3M295.0,571.1V576.7" stroke="#e0e0e8" stroke-width="1.2"/>
<text x="310.10" y="581.1" font-size="12" fill="#fff" textLength="34.13" lengthAdjust="spacingAndGlyphs">rotate</text>
<text x="353.00" y="581.1" font-size="12" fill="#fff" textLength="7.32" lengthAdjust="spacingAndGlyphs">X</text>
<path d="M374.7,583.4 c0,-8 -6.4,6.4 -6.4,-6 s6.4,2 6.4,-6 Z" fill="#9bcdf0"/>
<rect x="374.2" y="567.4" width="37.7" height="21.9" fill="#9bcdf0"/>
<path d="M374.2,588.8H411.4V567.4" fill="none" stroke="#86aecb" stroke-width="1"/>
<rect x="378.5" y="571.7" width="28.6" height="13.4" rx="3.5" fill="#dbeaf8"/>
<text x="392.8" y="581.7" font-size="12.5" fill="#000" text-anchor="middle">90°</text>
<text x="419.80" y="581.1" font-size="12" fill="#fff" textLength="6.62" lengthAdjust="spacingAndGlyphs">Y</text>
<path d="M440.1,583.4 c0,-8 -6.4,6.4 -6.4,-6 s6.4,2 6.4,-6 Z" fill="#9bcdf0"/>
<rect x="439.6" y="567.4" width="30.8" height="21.9" fill="#9bcdf0"/>
<path d="M439.6,588.8H469.9V567.4" fill="none" stroke="#86aecb" stroke-width="1"/>
<rect x="443.9" y="571.7" width="21.7" height="13.4" rx="3.5" fill="#dbeaf8"/>
<text x="454.8" y="581.7" font-size="12.5" fill="#000" text-anchor="middle">0°</text>
<text x="478.30" y="581.1" font-size="12" fill="#fff" textLength="7.01" lengthAdjust="spacingAndGlyphs">Z</text>
<path d="M499.0,583.4 c0,-8 -6.4,6.4 -6.4,-6 s6.4,2 6.4,-6 Z" fill="#9bcdf0"/>
<rect x="498.5" y="567.4" width="31.2" height="21.9" fill="#9bcdf0"/>
<path d="M498.5,588.8H529.2V567.4" fill="none" stroke="#86aecb" stroke-width="1"/>
<rect x="502.8" y="571.7" width="22.1" height="13.4" rx="3.5" fill="#dbeaf8"/>
<text x="513.9" y="581.7" font-size="12.5" fill="#000" text-anchor="middle">0°</text>
<path d="M297.2,598.2 A6.0,6.0 0 0,1 303.2,592.2 H308.7 l4.8,3.2 2.4,0 4.8,-3.2 H393.3 V612.8 H372.6 l-4.8,3.2 -2.4,0 -4.8,-3.2 H355.1 A6.0,6.0 0 0,0 349.1,618.8 V637.2 A6.0,6.0 0 0,0 355.1,643.2 H373.0 V652.8 H372.6 l-4.8,3.2 -2.4,0 -4.8,-3.2 H355.1 A6.0,6.0 0 0,0 349.1,658.8 V677.3 A6.0,6.0 0 0,0 355.1,683.3 H373.0 V692.8 H303.2 A6.0,6.0 0 0,1 297.2,686.8 Z" fill="#744ce0"/>
<path d="M297.7,686.8 V598.2 A5.5,5.5 0 0,1 303.2,592.7 H308.7 l4.8,3.2 2.4,0 4.8,-3.2 H392.8" fill="none" stroke="#ad98f0" stroke-width="1" opacity="0.9"/>
<path d="M349.6,637.2 A5.5,5.5 0 0,0 355.1,643.7 H372.6" fill="none" stroke="#ad98f0" stroke-width="1" opacity="0.9"/>
<path d="M349.6,677.3 A5.5,5.5 0 0,0 355.1,683.8 H372.6" fill="none" stroke="#ad98f0" stroke-width="1" opacity="0.9"/>
<rect x="305.6" y="597.0" width="11.9" height="11.9" rx="3.2" fill="#0000c8" stroke="#b4b4cc" stroke-width="1"/>
<path d="M308.2,603.0H314.9M311.6,600.2V605.8" stroke="#e0e0e8" stroke-width="1.2"/>
<text x="326.90" y="605.8" font-size="12" fill="#fff" textLength="57.48" lengthAdjust="spacingAndGlyphs">difference</text>
<text x="305.80" y="665.5" font-size="12" fill="#fff" textLength="34.37" lengthAdjust="spacingAndGlyphs">minus</text>
<path d="M349.1,618.8 A6.0,6.0 0 0,1 355.1,612.8 H360.6 l4.8,3.2 2.4,0 4.8,-3.2 H789.8 V643.2 H355.1 A6.0,6.0 0 0,1 349.1,637.2 Z" fill="#006205"/>
<path d="M349.6,637.2 V618.8 A5.5,5.5 0 0,1 355.1,613.3 H360.6 l4.8,3.2 2.4,0 4.8,-3.2 H789.3" fill="none" stroke="#5b9a5e" stroke-width="1" opacity="0.9"/>
<text x="357.70" y="631.2" font-size="12" fill="#fff" textLength="45.71" lengthAdjust="spacingAndGlyphs">cylinder</text>
<text x="419.10" y="631.2" font-size="12" fill="#fff" textLength="41.60" lengthAdjust="spacingAndGlyphs">radius1</text>
<path d="M475.4,633.9 c0,-8 -6.4,6.4 -6.4,-6 s6.4,2 6.4,-6 Z" fill="#9bcdf0"/>
<rect x="474.9" y="617.9" width="32.7" height="20.5" fill="#9bcdf0"/>
<path d="M474.9,637.9H507.1V617.9" fill="none" stroke="#86aecb" stroke-width="1"/>
<rect x="479.3" y="621.8" width="22.4" height="12.5" rx="3.5" fill="#dbeaf8"/>
<text x="490.5" y="630.9" font-size="12.5" fill="#000" text-anchor="middle">13</text>
<path d="M521.9,626.2 V624.1 A5.0,5.0 0 0,1 531.9,624.1 V626.2" fill="none" stroke="#1e1e1e" stroke-width="3.4" stroke-linecap="round"/>
<path d="M521.9,626.2 V624.1 A5.0,5.0 0 0,1 531.9,624.1 V626.2" fill="none" stroke="#cfd0dc" stroke-width="2"/>
<rect x="519.3" y="625.2" width="15.2" height="11.3" rx="0.8" fill="url(#gold)" stroke="#2a1e00" stroke-width="0.8"/>
<circle cx="526.9" cy="630.2" r="0.9" fill="#222"/><path d="M526.4,630.4h1l-0.2,2.3h-0.6z" fill="#222"/>
<text x="542.70" y="631.2" font-size="12" fill="#fff" textLength="42.00" lengthAdjust="spacingAndGlyphs">radius2</text>
<path d="M599.2,633.9 c0,-8 -6.4,6.4 -6.4,-6 s6.4,2 6.4,-6 Z" fill="#9bcdf0"/>
<rect x="598.7" y="617.9" width="32.0" height="20.5" fill="#9bcdf0"/>
<path d="M598.7,637.9H630.2V617.9" fill="none" stroke="#86aecb" stroke-width="1"/>
<rect x="603.0" y="622.2" width="22.9" height="12.0" rx="3.5" fill="#dbeaf8"/>
<text x="614.5" y="630.8" font-size="12.5" fill="#000" text-anchor="middle">13</text>
<text x="638.40" y="631.2" font-size="12" fill="#fff" textLength="36.50" lengthAdjust="spacingAndGlyphs">height</text>
<path d="M688.6,633.9 c0,-8 -6.4,6.4 -6.4,-6 s6.4,2 6.4,-6 Z" fill="#9bcdf0"/>
<rect x="688.1" y="617.9" width="24.9" height="20.5" fill="#9bcdf0"/>
<path d="M688.1,637.9H712.5V617.9" fill="none" stroke="#86aecb" stroke-width="1"/>
<rect x="692.4" y="622.2" width="15.8" height="12.0" rx="3.5" fill="#dbeaf8"/>
<text x="700.3" y="630.8" font-size="12.5" fill="#000" text-anchor="middle">5</text>
<rect x="716.4" y="621.1" width="68.5" height="12.3" rx="3.5" fill="#99c09b"/>
<text x="721.00" y="630.5" font-size="12.5" fill="#000" textLength="49.62" lengthAdjust="spacingAndGlyphs">centered</text>
<path d="M775.0,625.2H781.0L778.0,630.8Z" fill="#00620a"/>
<path d="M349.1,658.8 A6.0,6.0 0 0,1 355.1,652.8 H360.6 l4.8,3.2 2.4,0 4.8,-3.2 H789.8 V683.2 H355.1 A6.0,6.0 0 0,1 349.1,677.2 Z" fill="#006205"/>
<path d="M349.6,677.2 V658.8 A5.5,5.5 0 0,1 355.1,653.3 H360.6 l4.8,3.2 2.4,0 4.8,-3.2 H789.3" fill="none" stroke="#5b9a5e" stroke-width="1" opacity="0.9"/>
<text x="357.70" y="671.2" font-size="12" fill="#fff" textLength="45.71" lengthAdjust="spacingAndGlyphs">cylinder</text>
<text x="419.10" y="671.2" font-size="12" fill="#fff" textLength="41.60" lengthAdjust="spacingAndGlyphs">radius1</text>
<path d="M475.4,673.9 c0,-8 -6.4,6.4 -6.4,-6 s6.4,2 6.4,-6 Z" fill="#9bcdf0"/>
<rect x="474.9" y="657.9" width="32.7" height="20.5" fill="#9bcdf0"/>
<path d="M474.9,677.9H507.1V657.9" fill="none" stroke="#86aecb" stroke-width="1"/>
<rect x="479.3" y="661.8" width="22.4" height="12.5" rx="3.5" fill="#dbeaf8"/>
<text x="490.5" y="670.9" font-size="12.5" fill="#000" text-anchor="middle">11</text>
<path d="M521.9,666.2 V664.1 A5.0,5.0 0 0,1 531.9,664.1 V666.2" fill="none" stroke="#1e1e1e" stroke-width="3.4" stroke-linecap="round"/>
<path d="M521.9,666.2 V664.1 A5.0,5.0 0 0,1 531.9,664.1 V666.2" fill="none" stroke="#cfd0dc" stroke-width="2"/>
<rect x="519.3" y="665.2" width="15.2" height="11.3" rx="0.8" fill="url(#gold)" stroke="#2a1e00" stroke-width="0.8"/>
<circle cx="526.9" cy="670.2" r="0.9" fill="#222"/><path d="M526.4,670.4h1l-0.2,2.3h-0.6z" fill="#222"/>
<text x="542.70" y="671.2" font-size="12" fill="#fff" textLength="42.00" lengthAdjust="spacingAndGlyphs">radius2</text>
<path d="M599.2,673.9 c0,-8 -6.4,6.4 -6.4,-6 s6.4,2 6.4,-6 Z" fill="#9bcdf0"/>
<rect x="598.7" y="657.9" width="32.0" height="20.5" fill="#9bcdf0"/>
<path d="M598.7,677.9H630.2V657.9" fill="none" stroke="#86aecb" stroke-width="1"/>
<rect x="603.0" y="662.2" width="22.9" height="12.0" rx="3.5" fill="#dbeaf8"/>
<text x="614.5" y="670.8" font-size="12.5" fill="#000" text-anchor="middle">11</text>
<text x="638.40" y="671.2" font-size="12" fill="#fff" textLength="36.50" lengthAdjust="spacingAndGlyphs">height</text>
<path d="M688.6,673.9 c0,-8 -6.4,6.4 -6.4,-6 s6.4,2 6.4,-6 Z" fill="#9bcdf0"/>
<rect x="688.1" y="657.9" width="24.9" height="20.5" fill="#9bcdf0"/>
<path d="M688.1,677.9H712.5V657.9" fill="none" stroke="#86aecb" stroke-width="1"/>
<rect x="692.4" y="662.2" width="15.8" height="12.0" rx="3.5" fill="#dbeaf8"/>
<text x="700.3" y="670.8" font-size="12.5" fill="#000" text-anchor="middle">5</text>
<rect x="716.4" y="661.1" width="68.5" height="12.3" rx="3.5" fill="#99c09b"/>
<text x="721.00" y="670.5" font-size="12.5" fill="#000" textLength="49.62" lengthAdjust="spacingAndGlyphs">centered</text>
<path d="M775.0,665.2H781.0L778.0,670.8Z" fill="#00620a"/>
<rect x="875" y="224" width="10" height="240" rx="5" fill="#cecece"/>
<rect x="306" y="756" width="392" height="10.5" rx="5" fill="#cecece"/>
<g stroke="#c6c6c6" stroke-width="2" fill="none"><circle cx="846.9" cy="654.8" r="11.2"/><path d="M846.9,639.5V643.6M846.9,666V670.1M831.5,654.8H835.7M858.1,654.8H862.3"/></g><circle cx="846.9" cy="654.8" r="4.2" fill="#c6c6c6"/>
<g stroke="#c6c6c6" stroke-width="2" fill="none"><circle cx="846.9" cy="697.9" r="15.2"/><path d="M839.8,697.9H854M846.9,690.8V705"/><circle cx="846.9" cy="732.1" r="15.2"/><path d="M839.8,732.1H854"/></g>
<rect x="887" y="89.5" width="23" height="678.5" fill="#ececec"/>
<rect x="886.6" y="89.5" width="1" height="678.5" fill="#d2d2d2"/>
<rect x="896.2" y="414.2" width="2" height="2" fill="#bdbdbd"/><rect x="899.4" y="414.2" width="2" height="2" fill="#bdbdbd"/><rect x="896.2" y="418.2" width="2" height="2" fill="#bdbdbd"/><rect x="899.4" y="418.2" width="2" height="2" fill="#bdbdbd"/><rect x="896.2" y="422.2" width="2" height="2" fill="#bdbdbd"/><rect x="899.4" y="422.2" width="2" height="2" fill="#bdbdbd"/><rect x="896.2" y="426.2" width="2" height="2" fill="#bdbdbd"/><rect x="899.4" y="426.2" width="2" height="2" fill="#bdbdbd"/><rect x="896.2" y="430.2" width="2" height="2" fill="#bdbdbd"/><rect x="899.4" y="430.2" width="2" height="2" fill="#bdbdbd"/><rect x="896.2" y="434.2" width="2" height="2" fill="#bdbdbd"/><rect x="899.4" y="434.2" width="2" height="2" fill="#bdbdbd"/><rect x="896.2" y="438.2" width="2" height="2" fill="#bdbdbd"/><rect x="899.4" y="438.2" width="2" height="2" fill="#bdbdbd"/><rect x="896.2" y="442.2" width="2" height="2" fill="#bdbdbd"/><rect x="899.4" y="442.2" width="2" height="2" fill="#bdbdbd"/>
<svg x="910" y="89" width="456" height="553" viewBox="910 89 456 553" overflow="hidden">
<rect x="910" y="89" width="456" height="553" fill="#fff"/>
<path d="M342.58,411.21L1134.15,186.58M350.58,406.72L966.33,52113.17M342.57,413.48L1136.14,187.12M358.48,404.48L1918.21,52113.17M342.55,415.76L1138.13,187.67M366.30,402.28L2870.09,52113.17M342.54,418.07L1140.13,188.22M374.05,400.09L3821.97,52113.17M342.52,420.41L1142.14,188.77M381.71,397.93L4266.75,46142.36M342.51,422.77L1144.16,189.33M389.30,395.78L3432.43,29887.94M342.49,425.15L1146.20,189.88M396.81,393.66L3032.59,22098.06M342.48,427.56L1148.24,190.44M404.25,391.56L2797.94,17526.74M342.46,430.00L1150.29,191.01M411.61,389.48L2643.65,14520.78M342.43,434.95L1154.43,192.14M426.12,385.39L2453.14,10809.17M342.41,437.47L1156.52,192.72M433.28,383.37L2390.21,9583.12M342.40,440.01L1158.61,193.29M440.36,381.37L2340.06,8606.25M342.38,442.58L1160.72,193.87M447.37,379.39L2299.17,7809.61M342.37,445.18L1162.84,194.45M454.32,377.43L2265.19,7147.53M342.35,447.80L1164.97,195.03M461.20,375.48L2236.50,6588.57M342.33,450.46L1167.10,195.62M468.01,373.56L2211.95,6110.38M342.31,453.15L1169.26,196.21M474.76,371.65L2190.72,5696.63M342.30,455.86L1171.42,196.80M481.45,369.77L2172.16,5335.13M342.26,461.39L1175.78,198.00M494.63,366.04L2141.29,4733.69M342.24,464.20L1177.97,198.60M501.13,364.21L2128.31,4480.86M342.23,467.04L1180.18,199.21M507.57,362.39L2116.64,4253.51M342.21,469.92L1182.40,199.82M513.96,360.59L2106.09,4047.99M342.19,472.83L1184.63,200.43M520.28,358.80L2096.51,3861.28M342.17,475.77L1186.88,201.05M526.55,357.03L2087.77,3690.92M342.15,478.75L1189.13,201.66M532.76,355.28L2079.76,3534.85M342.13,481.76L1191.40,202.29M538.91,353.54L2072.39,3391.35M342.11,484.81L1193.68,202.91M545.01,351.82L2065.59,3258.95M342.07,491.02L1198.28,204.17M557.04,348.42L2053.47,3022.69M342.05,494.18L1200.60,204.81M562.98,346.75L2048.03,2916.85M342.03,497.38L1202.93,205.45M568.86,345.09L2042.97,2818.10M342.01,500.62L1205.27,206.09M574.69,343.44L2038.23,2725.76M341.99,503.90L1207.63,206.74M580.48,341.81L2033.78,2639.22M341.97,507.22L1210.00,207.39M586.21,340.19L2029.61,2557.94M341.95,510.58L1212.38,208.04M591.89,338.58L2025.69,2481.47M341.93,513.98L1214.77,208.70M597.52,336.99L2021.99,2409.39M341.91,517.43L1217.18,209.36M603.11,335.42L2018.49,2341.34M341.86,524.45L1222.04,210.69M614.13,332.30L2012.06,2216.01M341.84,528.03L1224.49,211.36M619.57,330.77L2009.09,2158.19M341.82,531.66L1226.95,212.04M624.97,329.24L2006.27,2103.27M341.79,535.34L1229.42,212.72M630.32,327.73L2003.59,2051.04M341.77,539.06L1231.92,213.40M635.63,326.24L2001.04,2001.31M341.75,542.83L1234.42,214.09M640.89,324.75L1998.61,1953.89M341.72,546.66L1236.94,214.78M646.11,323.28L1996.28,1908.65M341.70,550.53L1239.47,215.48M651.28,321.81L1994.06,1865.41M341.67,554.46L1242.02,216.17M656.42,320.37L1991.94,1824.07M341.62,562.47L1247.16,217.58M666.56,317.50L1987.96,1746.57M341.60,566.56L1249.75,218.30M671.56,316.09L1986.10,1710.20M341.57,570.71L1252.35,219.01M676.53,314.69L1984.31,1675.28M341.54,574.92L1254.97,219.73M681.46,313.30L1982.58,1641.74M341.51,579.18L1257.61,220.45M686.34,311.92L1980.93,1609.50M341.49,583.51L1260.26,221.18M691.19,310.55L1979.34,1578.48M341.46,587.90L1262.93,221.91M696.00,309.19L1977.80,1548.60M341.43,592.35L1265.61,222.65M700.77,307.84L1976.33,1519.82M341.40,596.86L1268.31,223.39M705.51,306.51L1974.90,1492.07M341.34,606.09L1273.76,224.88M714.86,303.86L1972.20,1439.45M341.31,610.81L1276.50,225.64M719.48,302.56L1970.92,1414.48M341.28,615.60L1279.27,226.39M724.07,301.26L1969.68,1390.34M341.25,620.46L1282.04,227.16M728.62,299.98L1968.48,1367.00M341.22,625.39L1284.84,227.92M733.14,298.70L1967.32,1344.41M341.19,630.40L1287.65,228.70M737.62,297.44L1966.20,1322.54M341.16,635.49L1290.48,229.47M742.07,296.18L1965.11,1301.36M341.12,640.66L1293.33,230.25M746.48,294.94L1964.06,1280.83M341.09,645.90L1296.19,231.04M750.86,293.70L1963.04,1260.92M341.02,656.65L1301.97,232.62M759.52,291.26L1961.08,1222.87M340.99,662.15L1304.89,233.42M763.80,290.05L1960.15,1204.67M340.95,667.74L1307.82,234.23M768.05,288.85L1959.24,1186.99M340.92,673.42L1310.78,235.04M772.26,287.66L1958.36,1169.82M340.88,679.19L1313.75,235.85M776.45,286.48L1957.50,1153.12M340.84,685.06L1316.74,236.67M780.60,285.30L1956.67,1136.88M340.81,691.03L1319.74,237.50M784.73,284.14L1955.86,1121.08M340.77,697.10L1322.77,238.33M788.82,282.98L1955.07,1105.70M340.73,703.27L1325.81,239.17M792.88,281.84L1954.30,1090.73M340.65,715.93L1331.96,240.85M800.92,279.57L1952.82,1061.94M340.61,722.43L1335.06,241.70M804.90,278.44L1952.11,1048.09M340.56,729.04L1338.18,242.56M808.84,277.33L1951.42,1034.59M340.52,735.77L1341.33,243.42M812.76,276.22L1950.74,1021.42M340.48,742.62L1344.49,244.29M816.65,275.12L1950.08,1008.57M340.43,749.59L1347.67,245.16M820.51,274.03L1949.44,996.04M340.39,756.69L1350.87,246.04M824.35,272.95L1948.81,983.80M340.34,763.92L1354.09,246.92M828.16,271.88L1948.20,971.86M340.30,771.28L1357.34,247.81M831.94,270.81L1947.60,960.19M340.20,786.43L1363.89,249.61M839.42,268.70L1946.44,937.64M340.15,794.22L1367.19,250.52M843.12,267.65L1945.88,926.75M340.10,802.16L1370.52,251.43M846.80,266.61L1945.34,916.11M340.05,810.25L1373.87,252.35M850.45,265.58L1944.80,905.69M340.00,818.51L1377.24,253.28M854.07,264.56L1944.28,895.51M339.94,826.92L1380.64,254.21M857.67,263.54L1943.77,885.54M339.89,835.51L1384.05,255.15M861.24,262.53L1943.27,875.79M339.83,844.27L1387.49,256.09M864.79,261.53L1942.78,866.24M339.78,853.21L1390.96,257.04M868.32,260.54L1942.30,856.89M339.66,871.64L1397.95,258.96M875.30,258.57L1941.37,838.76M339.60,881.16L1401.48,259.93M878.76,257.59L1940.92,829.97M339.54,890.87L1405.04,260.90M882.19,256.62L1940.47,821.36M339.47,900.79L1408.62,261.88M885.60,255.66L1940.04,812.92M339.41,910.93L1412.22,262.87M888.98,254.70L1939.62,804.65M339.34,921.29L1415.85,263.87M892.34,253.75L1939.20,796.53M339.28,931.88L1419.50,264.87M895.69,252.81L1938.79,788.57M339.21,942.72L1423.18,265.88M899.00,251.87L1938.39,780.77M339.14,953.79L1426.88,266.90M902.30,250.94L1938.00,773.11M338.99,976.73L1434.37,268.95M908.83,249.10L1937.23,758.22M338.92,988.60L1438.15,269.99M912.06,248.19L1936.86,750.98M338.84,1000.75L1441.96,271.03M915.27,247.28L1936.50,743.87M338.76,1013.20L1445.79,272.08M918.46,246.38L1936.14,736.89M338.68,1025.95L1449.65,273.14M921.63,245.49L1935.79,730.03M338.60,1039.02L1453.54,274.21M924.78,244.60L1935.44,723.30M338.51,1052.42L1457.46,275.28M927.91,243.71L1935.10,716.68M338.42,1066.15L1461.40,276.37M931.02,242.84L1934.77,710.18M338.33,1080.24L1465.37,277.46M934.11,241.96L1934.44,703.79M338.15,1109.54L1473.40,279.66M940.22,240.24L1933.80,691.34M338.05,1124.77L1477.46,280.77M943.26,239.38L1933.49,685.27M337.95,1140.42L1481.54,281.89M946.27,238.53L1933.18,679.31M337.85,1156.49L1485.66,283.02M949.26,237.69L1932.88,673.44M337.75,1173.02L1489.81,284.16M952.23,236.85L1932.59,667.67M337.64,1190.01L1493.98,285.31M955.19,236.01L1932.29,661.99M337.53,1207.49L1498.19,286.46M958.12,235.18L1932.01,656.40M337.41,1225.48L1502.43,287.62M961.04,234.36L1931.73,650.90M337.30,1244.00L1506.70,288.79M963.94,233.54L1931.45,645.49M337.05,1282.72L1515.33,291.16M969.69,231.92L1930.91,634.93M336.92,1302.98L1519.70,292.36M972.53,231.11L1930.64,629.77M336.79,1323.87L1524.10,293.57M975.36,230.31L1930.38,624.69M336.65,1345.43L1528.53,294.78M978.18,229.52L1930.12,619.69M336.51,1367.69L1532.99,296.01M980.97,228.73L1929.87,614.76M336.36,1390.68L1537.49,297.24M983.75,227.95L1929.62,609.91M336.21,1414.44L1542.02,298.49M986.51,227.17L1929.38,605.13M336.06,1439.00L1546.59,299.74M989.25,226.39L1929.13,600.42M335.90,1464.42L1551.19,301.00M991.98,225.62L1928.90,595.78M335.56,1517.99L1560.50,303.56M997.39,224.10L1928.43,586.70M335.38,1546.24L1565.21,304.85M1000.07,223.34L1928.20,582.26M335.19,1575.54L1569.96,306.15M1002.73,222.59L1927.98,577.88M335.00,1605.95L1574.74,307.46M1005.38,221.84L1927.76,573.57M334.80,1637.53L1579.56,308.79M1008.01,221.10L1927.54,569.32M334.59,1670.36L1584.42,310.12M1010.63,220.36L1927.32,565.12M334.37,1704.51L1589.32,311.46M1013.23,219.62L1927.11,560.98M334.15,1740.06L1594.25,312.82M1015.82,218.89L1926.90,556.91M333.91,1777.09L1599.23,314.18M1018.39,218.17L1926.69,552.88M333.41,1856.02L1609.30,316.95M1023.48,216.73L1926.29,545.00M333.14,1898.12L1614.40,318.34M1026.01,216.02L1926.09,541.14M332.86,1942.15L1619.53,319.75M1028.52,215.31L1925.90,537.33M332.57,1988.23L1624.71,321.18M1031.02,214.60L1925.70,533.57M332.27,2036.53L1629.93,322.61M1033.50,213.90L1925.51,529.86M331.94,2087.19L1635.20,324.05M1035.97,213.20L1925.32,526.19M331.61,2140.39L1640.51,325.51M1038.43,212.51L1925.14,522.58M331.25,2196.34L1645.86,326.98M1040.87,211.82L1924.96,519.01M330.88,2255.25L1651.25,328.46M1043.29,211.14L1924.77,515.49M330.07,2382.94L1662.18,331.46M1048.11,209.78L1924.42,508.58M329.63,2452.30L1667.71,332.97M1050.49,209.10L1924.25,505.19M329.16,2525.76L1673.29,334.50M1052.87,208.43L1924.07,501.84M328.67,2603.69L1678.92,336.05M1055.22,207.77L1923.90,498.54M328.14,2686.54L1684.59,337.60M1057.57,207.10L1923.74,495.27M327.58,2774.76L1690.32,339.17M1059.90,206.45L1923.57,492.05M326.98,2868.91L1696.09,340.76M1062.22,205.79L1923.41,488.86M326.34,2969.59L1701.91,342.36M1064.53,205.14L1923.25,485.72M325.66,3077.53L1707.78,343.97M1066.83,204.49L1923.09,482.61M324.13,3318.50L1719.68,347.23M1071.38,203.21L1922.77,476.50M323.27,3453.57L1725.71,348.89M1073.64,202.57L1922.62,473.50M322.34,3600.00L1731.79,350.55M1075.88,201.93L1922.47,470.54M321.33,3759.27L1737.92,352.24M1078.11,201.30L1922.32,467.61M320.23,3933.17L1744.11,353.93M1080.33,200.68L1922.17,464.72M319.02,4123.79L1750.36,355.65M1082.54,200.05L1922.02,461.85M317.69,4333.68L1756.66,357.38M1084.74,199.43L1921.88,459.03M316.21,4565.91L1763.01,359.12M1086.92,198.82L1921.73,456.23M314.57,4824.25L1769.43,360.88M1089.10,198.20L1921.59,453.47M310.67,5439.09L1782.43,364.45M1093.41,196.99L1921.31,448.03M308.32,5808.86L1789.02,366.26M1095.55,196.38L1921.17,445.36M305.64,6232.27L1795.68,368.08M1097.67,195.78L1921.04,442.72M302.53,6721.90L1802.39,369.92M1099.79,195.18L1920.90,440.10M298.90,7294.58L1809.17,371.78M1101.89,194.59L1920.77,437.52M294.59,7973.41L1816.01,373.66M1103.99,194.00L1920.64,434.96M289.40,8790.92L1822.91,375.55M1106.07,193.41L1920.51,432.43M283.03,9794.46L1829.88,377.47M1108.14,192.83L1920.38,429.93M275.03,11055.64L1836.91,379.40M1110.20,192.24L1920.26,427.46M250.72,14885.01L1851.19,383.31M1114.29,191.09L1920.01,422.59M230.96,17998.94L1858.43,385.30M1116.32,190.52L1919.88,420.19M200.77,22756.23L1865.73,387.30M1118.34,189.95L1919.76,417.82M148.93,30924.11L1873.11,389.33M1120.35,189.38L1919.64,415.48M39.16,48219.55L1880.57,391.37M1122.35,188.82L1919.52,413.16M826.05,52113.17L1888.09,393.44M1124.33,188.25L1919.40,410.86M1762.85,52113.17L1895.69,395.52M1126.31,187.70L1919.29,408.59M2699.64,52113.17L1903.37,397.63M1128.28,187.14L1919.17,406.34M3636.43,52113.17L1911.12,399.76M1130.24,186.59L1919.06,404.11" stroke="#bbb" stroke-width="0.6" opacity="0.55" fill="none"/>
<path d="M342.60,408.97L1132.18,186.04M342.60,408.97L14.45,52113.17M342.45,432.46L1152.36,191.57M418.90,387.42L2534.47,12393.68M342.28,458.61L1173.59,197.40M488.07,367.90L2155.81,5016.56M342.09,487.90L1195.98,203.54M551.05,350.11L2059.30,3136.42M341.88,520.92L1219.60,210.02M608.64,333.85L2015.19,2276.97M341.65,558.44L1244.58,216.88M661.51,318.93L1989.91,1784.49M341.37,601.44L1271.03,224.13M710.20,305.18L1973.53,1465.30M341.06,651.23L1299.07,231.83M755.20,292.47L1962.05,1241.61M340.69,709.55L1328.88,240.01M796.92,280.70L1953.55,1076.14M340.25,778.79L1360.60,248.71M835.69,269.75L1947.02,948.79M339.72,862.33L1394.44,257.99M871.82,259.55L1941.83,847.73M339.07,965.13L1430.61,267.92M905.58,250.02L1937.61,765.59M338.24,1094.70L1469.37,278.55M937.18,241.10L1934.12,697.51M337.17,1263.07L1511.00,289.98M966.82,232.73L1931.17,640.17M335.73,1490.73L1555.83,302.28M994.69,224.86L1928.66,591.21M333.67,1815.71L1604.24,315.56M1020.94,217.45L1926.49,548.91M330.48,2317.36L1656.69,329.95M1045.71,210.45L1924.60,512.01M324.92,3193.52L1713.71,345.59M1069.11,203.85L1922.93,479.54M312.74,5113.36L1775.90,362.66M1091.26,197.59L1921.45,450.73M264.66,12688.33L1844.02,381.35M1112.25,191.67L1920.13,425.01M4573.23,52113.17L1918.94,401.90M1132.18,186.04L1918.94,401.90" stroke="#8a8a8a" stroke-width="1.35" opacity="0.95" fill="none"/>
<line x1="1137.17" y1="405.41" x2="95202.47" y2="52113.17" stroke="#ff0000" stroke-width="1.2"/>
<line x1="1137.17" y1="405.41" x2="739.68" y2="186.91" stroke="#ff1010" stroke-width="1.6" stroke-dasharray="2.4,3.2"/>
<line x1="1137.17" y1="405.41" x2="1521.53" y2="185.17" stroke="#00cc00" stroke-width="1.2"/>
<line x1="1137.17" y1="405.41" x2="-89106.26" y2="52113.17" stroke="#00cc00" stroke-width="1.5" stroke-dasharray="4.5,4.5"/>
<polygon points="1208.35,418.74 1212.27,415.99 1215.79,413.12 1218.91,410.15 1221.61,407.09 1223.90,403.95 1225.76,400.76 1227.21,397.54 1228.23,394.29 1228.84,391.04 1229.04,387.79 1228.85,384.57 1228.26,381.39 1227.30,378.26 1225.97,375.19 1224.29,372.20 1222.28,369.28 1219.94,366.46 1217.30,363.75 1214.36,361.14 1211.16,358.65 1207.69,356.28 1203.99,354.04 1200.06,351.94 1195.92,349.98 1191.60,348.16 1187.10,346.49 1182.45,344.98 1177.65,343.61 1172.74,342.41 1167.71,341.36 1162.59,340.48 1157.40,339.76 1152.15,339.20 1146.86,338.80 1141.53,338.57 1136.20,338.51 1130.87,338.62 1125.56,338.88 1120.28,339.32 1115.05,339.92 1109.89,340.68 1104.81,341.60 1099.83,342.69 1094.96,343.93 1090.23,345.33 1085.64,346.89 1081.21,348.59 1076.97,350.45 1072.92,352.44 1069.08,354.58 1065.48,356.85 1062.12,359.24 1059.02,361.76 1056.21,364.40 1053.69,367.14 1051.48,369.99 1049.60,372.92 1048.06,375.94 1046.87,379.02 1046.06,382.17 1045.63,385.36 1045.59,388.58 1045.95,391.83 1046.72,395.08 1047.90,398.33 1049.51,401.54 1051.53,404.72 1053.98,407.84 1056.84,410.88 1060.11,413.83 1063.78,416.68 1067.85,419.39 1072.28,421.96 1077.08,424.37 1082.20,426.60 1087.64,428.63 1093.36,430.46 1099.34,432.07 1105.54,433.45 1111.92,434.59 1118.45,435.47 1125.10,436.10 1131.82,436.46 1138.57,436.56 1145.32,436.40 1152.02,435.97 1158.63,435.28 1165.11,434.33 1171.43,433.14 1177.55,431.70 1183.44,430.04 1189.06,428.15 1194.38,426.07 1199.39,423.79 1204.05,421.35" fill="#1498ff" stroke="#1498ff" stroke-width="1.1" stroke-linejoin="round"/>
<polygon points="1046.74,403.03 1047.10,406.34 1045.95,391.83 1045.59,388.58" fill="#0a4d81" stroke="#0a4d81" stroke-width="1.1" stroke-linejoin="round"/>
<polygon points="1226.98,408.85 1227.59,405.53 1228.84,391.04 1228.23,394.29" fill="#0e6bb4" stroke="#0e6bb4" stroke-width="1.1" stroke-linejoin="round"/>
<polygon points="1047.10,406.34 1047.87,409.66 1046.72,395.08 1045.95,391.83" fill="#0a4e83" stroke="#0a4e83" stroke-width="1.1" stroke-linejoin="round"/>
<polygon points="1225.96,412.16 1226.98,408.85 1228.23,394.29 1227.21,397.54" fill="#0e6bb5" stroke="#0e6bb5" stroke-width="1.1" stroke-linejoin="round"/>
<polygon points="1047.87,409.66 1049.05,412.97 1047.90,398.33 1046.72,395.08" fill="#0a4e84" stroke="#0a4e84" stroke-width="1.1" stroke-linejoin="round"/>
<polygon points="1224.52,415.46 1225.96,412.16 1227.21,397.54 1225.76,400.76" fill="#0e6cb5" stroke="#0e6cb5" stroke-width="1.1" stroke-linejoin="round"/>
<polygon points="1049.05,412.97 1050.64,416.25 1049.51,401.54 1047.90,398.33" fill="#0a4f85" stroke="#0a4f85" stroke-width="1.1" stroke-linejoin="round"/>
<polygon points="1222.68,418.71 1224.52,415.46 1225.76,400.76 1223.90,403.95" fill="#0e6cb5" stroke="#0e6cb5" stroke-width="1.1" stroke-linejoin="round"/>
<polygon points="1050.64,416.25 1052.65,419.49 1051.53,404.72 1049.51,401.54" fill="#0a5087" stroke="#0a5087" stroke-width="1.1" stroke-linejoin="round"/>
<polygon points="1220.41,421.91 1222.68,418.71 1223.90,403.95 1221.61,407.09" fill="#0e6cb5" stroke="#0e6cb5" stroke-width="1.1" stroke-linejoin="round"/>
<polygon points="1052.65,419.49 1055.06,422.68 1053.98,407.84 1051.53,404.72" fill="#0a5188" stroke="#0a5188" stroke-width="1.1" stroke-linejoin="round"/>
<polygon points="1217.74,425.03 1220.41,421.91 1221.61,407.09 1218.91,410.15" fill="#0e6cb5" stroke="#0e6cb5" stroke-width="1.1" stroke-linejoin="round"/>
<polygon points="1055.06,422.68 1057.89,425.78 1056.84,410.88 1053.98,407.84" fill="#0a528a" stroke="#0a528a" stroke-width="1.1" stroke-linejoin="round"/>
<polygon points="1214.66,428.06 1217.74,425.03 1218.91,410.15 1215.79,413.12" fill="#0e6bb5" stroke="#0e6bb5" stroke-width="1.1" stroke-linejoin="round"/>
<polygon points="1057.89,425.78 1061.13,428.79 1060.11,413.83 1056.84,410.88" fill="#0a538b" stroke="#0a538b" stroke-width="1.1" stroke-linejoin="round"/>
<polygon points="1211.17,430.99 1214.66,428.06 1215.79,413.12 1212.27,415.99" fill="#0e6bb4" stroke="#0e6bb4" stroke-width="1.1" stroke-linejoin="round"/>
<polygon points="1061.13,428.79 1064.76,431.68 1063.78,416.68 1060.11,413.83" fill="#0b548d" stroke="#0b548d" stroke-width="1.1" stroke-linejoin="round"/>
<polygon points="1086.38,443.41 1090.74,445.37 1082.93,441.79 1077.87,439.52" fill="#0b5894" stroke="#0b5894" stroke-width="1.1" stroke-linejoin="round"/>
<polygon points="1207.30,433.79 1211.17,430.99 1212.27,415.99 1208.35,418.74" fill="#0e6bb4" stroke="#0e6bb4" stroke-width="1.1" stroke-linejoin="round"/>
<polygon points="1064.76,431.68 1068.77,434.45 1067.85,419.39 1063.78,416.68" fill="#0b558f" stroke="#0b558f" stroke-width="1.1" stroke-linejoin="round"/>
<polygon points="1180.82,446.74 1185.35,444.91 1193.52,441.25 1188.26,443.38" fill="#0d69b1" stroke="#0d69b1" stroke-width="1.1" stroke-linejoin="round"/>
<polygon points="1090.74,445.37 1095.36,447.15 1088.30,443.87 1082.93,441.79" fill="#0b5996" stroke="#0b5996" stroke-width="1.1" stroke-linejoin="round"/>
<polygon points="1203.06,436.44 1207.30,433.79 1208.35,418.74 1204.05,421.35" fill="#0e6bb3" stroke="#0e6bb3" stroke-width="1.1" stroke-linejoin="round"/>
<polygon points="1176.06,448.38 1180.82,446.74 1188.26,443.38 1182.72,445.29" fill="#0d69b0" stroke="#0d69b0" stroke-width="1.1" stroke-linejoin="round"/>
<polygon points="1068.77,434.45 1073.15,437.07 1072.28,421.96 1067.85,419.39" fill="#0b5690" stroke="#0b5690" stroke-width="1.1" stroke-linejoin="round"/>
<polygon points="1095.36,447.15 1100.20,448.76 1093.94,445.73 1088.30,443.87" fill="#0b5a98" stroke="#0b5a98" stroke-width="1.1" stroke-linejoin="round"/>
<polygon points="1171.08,449.84 1176.06,448.38 1182.72,445.29 1176.92,446.99" fill="#0d68af" stroke="#0d68af" stroke-width="1.1" stroke-linejoin="round"/>
<polygon points="1100.20,448.76 1105.25,450.17 1099.83,447.37 1093.94,445.73" fill="#0c5b9a" stroke="#0c5b9a" stroke-width="1.1" stroke-linejoin="round"/>
<polygon points="1198.46,438.94 1203.06,436.44 1204.05,421.35 1199.39,423.79" fill="#0e6ab3" stroke="#0e6ab3" stroke-width="1.1" stroke-linejoin="round"/>
<polygon points="1073.15,437.07 1077.87,439.52 1077.08,424.37 1072.28,421.96" fill="#0b5792" stroke="#0b5792" stroke-width="1.1" stroke-linejoin="round"/>
<polygon points="1165.92,451.10 1171.08,449.84 1176.92,446.99 1170.88,448.45" fill="#0d67ad" stroke="#0d67ad" stroke-width="1.1" stroke-linejoin="round"/>
<polygon points="1105.25,450.17 1110.48,451.37 1105.94,448.77 1099.83,447.37" fill="#0c5c9b" stroke="#0c5c9b" stroke-width="1.1" stroke-linejoin="round"/>
<polygon points="1160.59,452.14 1165.92,451.10 1170.88,448.45 1164.65,449.67" fill="#0d66ac" stroke="#0d66ac" stroke-width="1.1" stroke-linejoin="round"/>
<polygon points="1110.48,451.37 1115.86,452.36 1112.23,449.93 1105.94,448.77" fill="#0c5e9d" stroke="#0c5e9d" stroke-width="1.1" stroke-linejoin="round"/>
<polygon points="1193.52,441.25 1198.46,438.94 1199.39,423.79 1194.38,426.07" fill="#0d6ab2" stroke="#0d6ab2" stroke-width="1.1" stroke-linejoin="round"/>
<polygon points="1077.87,439.52 1082.93,441.79 1082.20,426.60 1077.08,424.37" fill="#0b5894" stroke="#0b5894" stroke-width="1.1" stroke-linejoin="round"/>
<polygon points="1155.13,452.97 1160.59,452.14 1164.65,449.67 1158.26,450.63" fill="#0d66ab" stroke="#0d66ab" stroke-width="1.1" stroke-linejoin="round"/>
<polygon points="1115.86,452.36 1121.36,453.14 1118.67,450.83 1112.23,449.93" fill="#0c5f9f" stroke="#0c5f9f" stroke-width="1.1" stroke-linejoin="round"/>
<polygon points="1149.57,453.57 1155.13,452.97 1158.26,450.63 1151.75,451.34" fill="#0d65a9" stroke="#0d65a9" stroke-width="1.1" stroke-linejoin="round"/>
<polygon points="1121.36,453.14 1126.95,453.68 1125.22,451.47 1118.67,450.83" fill="#0c60a1" stroke="#0c60a1" stroke-width="1.1" stroke-linejoin="round"/>
<polygon points="1143.94,453.95 1149.57,453.57 1151.75,451.34 1145.15,451.77" fill="#0d64a8" stroke="#0d64a8" stroke-width="1.1" stroke-linejoin="round"/>
<polygon points="1126.95,453.68 1132.60,454.00 1131.85,451.84 1125.22,451.47" fill="#0c61a3" stroke="#0c61a3" stroke-width="1.1" stroke-linejoin="round"/>
<polygon points="1138.27,454.09 1143.94,453.95 1145.15,451.77 1138.50,451.94" fill="#0d63a6" stroke="#0d63a6" stroke-width="1.1" stroke-linejoin="round"/>
<polygon points="1132.60,454.00 1138.27,454.09 1138.50,451.94 1131.85,451.84" fill="#0c62a4" stroke="#0c62a4" stroke-width="1.1" stroke-linejoin="round"/>
<polygon points="1188.26,443.38 1193.52,441.25 1194.38,426.07 1189.06,428.15" fill="#0d69b1" stroke="#0d69b1" stroke-width="1.1" stroke-linejoin="round"/>
<polygon points="1082.93,441.79 1088.30,443.87 1087.64,428.63 1082.20,426.60" fill="#0b5996" stroke="#0b5996" stroke-width="1.1" stroke-linejoin="round"/>
<polygon points="1182.72,445.29 1188.26,443.38 1189.06,428.15 1183.44,430.04" fill="#0d69b0" stroke="#0d69b0" stroke-width="1.1" stroke-linejoin="round"/>
<polygon points="1088.30,443.87 1093.94,445.73 1093.36,430.46 1087.64,428.63" fill="#0b5a98" stroke="#0b5a98" stroke-width="1.1" stroke-linejoin="round"/>
<polygon points="1176.92,446.99 1182.72,445.29 1183.44,430.04 1177.55,431.70" fill="#0d68af" stroke="#0d68af" stroke-width="1.1" stroke-linejoin="round"/>
<polygon points="1093.94,445.73 1099.83,447.37 1099.34,432.07 1093.36,430.46" fill="#0c5b9a" stroke="#0c5b9a" stroke-width="1.1" stroke-linejoin="round"/>
<polygon points="1170.88,448.45 1176.92,446.99 1177.55,431.70 1171.43,433.14" fill="#0d67ad" stroke="#0d67ad" stroke-width="1.1" stroke-linejoin="round"/>
<polygon points="1099.83,447.37 1105.94,448.77 1105.54,433.45 1099.34,432.07" fill="#0c5c9b" stroke="#0c5c9b" stroke-width="1.1" stroke-linejoin="round"/>
<polygon points="1164.65,449.67 1170.88,448.45 1171.43,433.14 1165.11,434.33" fill="#0d66ac" stroke="#0d66ac" stroke-width="1.1" stroke-linejoin="round"/>
<polygon points="1105.94,448.77 1112.23,449.93 1111.92,434.59 1105.54,433.45" fill="#0c5e9d" stroke="#0c5e9d" stroke-width="1.1" stroke-linejoin="round"/>
<polygon points="1158.26,450.63 1164.65,449.67 1165.11,434.33 1158.63,435.28" fill="#0d66ab" stroke="#0d66ab" stroke-width="1.1" stroke-linejoin="round"/>
<polygon points="1112.23,449.93 1118.67,450.83 1118.45,435.47 1111.92,434.59" fill="#0c5f9f" stroke="#0c5f9f" stroke-width="1.1" stroke-linejoin="round"/>
<polygon points="1151.75,451.34 1158.26,450.63 1158.63,435.28 1152.02,435.97" fill="#0d65a9" stroke="#0d65a9" stroke-width="1.1" stroke-linejoin="round"/>
<polygon points="1118.67,450.83 1125.22,451.47 1125.10,436.10 1118.45,435.47" fill="#0c60a1" stroke="#0c60a1" stroke-width="1.1" stroke-linejoin="round"/>
<polygon points="1145.15,451.77 1151.75,451.34 1152.02,435.97 1145.32,436.40" fill="#0d64a8" stroke="#0d64a8" stroke-width="1.1" stroke-linejoin="round"/>
<polygon points="1125.22,451.47 1131.85,451.84 1131.82,436.46 1125.10,436.10" fill="#0c61a3" stroke="#0c61a3" stroke-width="1.1" stroke-linejoin="round"/>
<polygon points="1138.50,451.94 1145.15,451.77 1145.32,436.40 1138.57,436.56" fill="#0d63a6" stroke="#0d63a6" stroke-width="1.1" stroke-linejoin="round"/>
<polygon points="1131.85,451.84 1138.50,451.94 1138.57,436.56 1131.82,436.46" fill="#0c62a4" stroke="#0c62a4" stroke-width="1.1" stroke-linejoin="round"/>
<polygon points="1092.39,348.33 1094.22,351.94 1114.42,342.33 1112.63,338.81" fill="#1186e1" stroke="#1186e1" stroke-width="1.1" stroke-linejoin="round"/>
<polygon points="1094.22,351.94 1096.18,355.46 1116.34,345.76 1114.42,342.33" fill="#1188e5" stroke="#1188e5" stroke-width="1.1" stroke-linejoin="round"/>
<polygon points="1090.69,344.65 1092.39,348.33 1112.63,338.81 1110.99,335.22" fill="#1183dc" stroke="#1183dc" stroke-width="1.1" stroke-linejoin="round"/>
<polygon points="1096.18,355.46 1098.26,358.89 1118.38,349.10 1116.34,345.76" fill="#128ae8" stroke="#128ae8" stroke-width="1.1" stroke-linejoin="round"/>
<polygon points="1089.14,340.91 1090.69,344.65 1110.99,335.22 1109.49,331.57" fill="#1081d8" stroke="#1081d8" stroke-width="1.1" stroke-linejoin="round"/>
<polygon points="1098.26,358.89 1100.47,362.22 1120.54,352.34 1118.38,349.10" fill="#128cec" stroke="#128cec" stroke-width="1.1" stroke-linejoin="round"/>
<polygon points="1087.73,337.13 1089.14,340.91 1109.49,331.57 1108.14,327.87" fill="#107ed3" stroke="#107ed3" stroke-width="1.1" stroke-linejoin="round"/>
<polygon points="1100.47,362.22 1102.78,365.43 1122.82,355.45 1120.54,352.34" fill="#128eef" stroke="#128eef" stroke-width="1.1" stroke-linejoin="round"/>
<polygon points="1086.48,333.31 1087.73,337.13 1108.14,327.87 1106.94,324.14" fill="#107bcf" stroke="#107bcf" stroke-width="1.1" stroke-linejoin="round"/>
<polygon points="1102.78,365.43 1105.19,368.51 1125.20,358.44 1122.82,355.45" fill="#1390f2" stroke="#1390f2" stroke-width="1.1" stroke-linejoin="round"/>
<polygon points="1085.38,329.47 1086.48,333.31 1106.94,324.14 1105.91,320.38" fill="#0f78ca" stroke="#0f78ca" stroke-width="1.1" stroke-linejoin="round"/>
<polygon points="1105.19,368.51 1107.70,371.45 1127.68,361.29 1125.20,358.44" fill="#1392f5" stroke="#1392f5" stroke-width="1.1" stroke-linejoin="round"/>
<polygon points="1084.45,325.63 1085.38,329.47 1105.91,320.38 1105.03,316.62" fill="#0f75c5" stroke="#0f75c5" stroke-width="1.1" stroke-linejoin="round"/>
<polygon points="1092.39,348.33 1086.65,351.22 1088.79,355.42 1094.22,351.94" fill="#0a4c7f" stroke="#0a4c7f" stroke-width="1.1" stroke-linejoin="round"/>
<polygon points="1094.22,351.94 1088.79,355.42 1091.07,359.54 1096.18,355.46" fill="#0a4c7f" stroke="#0a4c7f" stroke-width="1.1" stroke-linejoin="round"/>
<polygon points="1090.69,344.65 1084.67,346.93 1086.65,351.22 1092.39,348.33" fill="#0a4c7f" stroke="#0a4c7f" stroke-width="1.1" stroke-linejoin="round"/>
<polygon points="1096.18,355.46 1091.07,359.54 1093.50,363.54 1098.26,358.89" fill="#0a4c7f" stroke="#0a4c7f" stroke-width="1.1" stroke-linejoin="round"/>
<polygon points="1089.14,340.91 1082.85,342.57 1084.67,346.93 1090.69,344.65" fill="#0a4c7f" stroke="#0a4c7f" stroke-width="1.1" stroke-linejoin="round"/>
<polygon points="1107.70,371.45 1110.29,374.24 1130.25,363.98 1127.68,361.29" fill="#1393f7" stroke="#1393f7" stroke-width="1.1" stroke-linejoin="round"/>
<polygon points="1098.26,358.89 1093.50,363.54 1096.07,367.43 1100.47,362.22" fill="#0a4c7f" stroke="#0a4c7f" stroke-width="1.1" stroke-linejoin="round"/>
<polygon points="1083.68,321.79 1084.45,325.63 1105.03,316.62 1104.33,312.86" fill="#0f72bf" stroke="#0f72bf" stroke-width="1.1" stroke-linejoin="round"/>
<polygon points="1087.73,337.13 1081.21,338.15 1082.85,342.57 1089.14,340.91" fill="#0a4c7f" stroke="#0a4c7f" stroke-width="1.1" stroke-linejoin="round"/>
<polygon points="1100.47,362.22 1096.07,367.43 1098.76,371.18 1102.78,365.43" fill="#0a4c7f" stroke="#0a4c7f" stroke-width="1.1" stroke-linejoin="round"/>
<polygon points="1102.78,365.43 1098.76,371.18 1099.95,372.71 1102.10,373.86 1105.19,368.51" fill="#0a4c7f" stroke="#0a4c7f" stroke-width="1.1" stroke-linejoin="round"/>
<polygon points="1086.48,333.31 1079.73,333.70 1081.21,338.15 1087.73,337.13" fill="#0a4c7f" stroke="#0a4c7f" stroke-width="1.1" stroke-linejoin="round"/>
<polygon points="1110.29,374.24 1112.97,376.86 1132.90,366.52 1130.25,363.98" fill="#1394f9" stroke="#1394f9" stroke-width="1.1" stroke-linejoin="round"/>
<polygon points="1083.08,317.97 1083.68,321.79 1104.33,312.86 1103.79,309.11" fill="#0e6fba" stroke="#0e6fba" stroke-width="1.1" stroke-linejoin="round"/>
<polygon points="1085.38,329.47 1078.44,329.22 1079.73,333.70 1086.48,333.31" fill="#0a4c7f" stroke="#0a4c7f" stroke-width="1.1" stroke-linejoin="round"/>
<polygon points="1112.97,376.86 1115.71,379.32 1135.62,368.89 1132.90,366.52" fill="#1395fb" stroke="#1395fb" stroke-width="1.1" stroke-linejoin="round"/>
<polygon points="1084.45,325.63 1077.34,324.73 1078.44,329.22 1085.38,329.47" fill="#0a4c7f" stroke="#0a4c7f" stroke-width="1.1" stroke-linejoin="round"/>
<polygon points="1082.66,314.18 1083.08,317.97 1103.79,309.11 1103.44,305.40" fill="#0e6cb5" stroke="#0e6cb5" stroke-width="1.1" stroke-linejoin="round"/>
<polygon points="1105.19,368.51 1102.10,373.86 1105.66,375.75 1107.70,371.45" fill="#0a4c7f" stroke="#0a4c7f" stroke-width="1.1" stroke-linejoin="round"/>
<polygon points="1115.71,379.32 1118.51,381.59 1138.41,371.07 1135.62,368.89" fill="#1396fc" stroke="#1396fc" stroke-width="1.1" stroke-linejoin="round"/>
<polygon points="1083.68,321.79 1076.42,320.25 1077.34,324.73 1084.45,325.63" fill="#0a4c7f" stroke="#0a4c7f" stroke-width="1.1" stroke-linejoin="round"/>
<polygon points="1082.41,310.44 1082.66,314.18 1103.44,305.40 1103.25,301.73" fill="#0d68b0" stroke="#0d68b0" stroke-width="1.1" stroke-linejoin="round"/>
<polygon points="1107.70,371.45 1105.66,375.75 1109.02,377.55 1110.29,374.24" fill="#0a4c7f" stroke="#0a4c7f" stroke-width="1.1" stroke-linejoin="round"/>
<polygon points="1083.08,317.97 1075.70,315.78 1076.42,320.25 1083.68,321.79" fill="#0a4c7f" stroke="#0a4c7f" stroke-width="1.1" stroke-linejoin="round"/>
<polygon points="1118.51,381.59 1121.36,383.68 1141.25,373.07 1138.41,371.07" fill="#1397fd" stroke="#1397fd" stroke-width="1.1" stroke-linejoin="round"/>
<polygon points="1082.34,306.76 1082.41,310.44 1103.25,301.73 1103.25,298.11" fill="#0d65aa" stroke="#0d65aa" stroke-width="1.1" stroke-linejoin="round"/>
<polygon points="1110.29,374.24 1109.02,377.55 1112.24,379.26 1112.97,376.86" fill="#0a4c7f" stroke="#0a4c7f" stroke-width="1.1" stroke-linejoin="round"/>
<polygon points="1082.66,314.18 1075.18,311.34 1075.70,315.78 1083.08,317.97" fill="#0a4c7f" stroke="#0a4c7f" stroke-width="1.1" stroke-linejoin="round"/>
<polygon points="1121.36,383.68 1124.25,385.56 1144.13,374.87 1141.25,373.07" fill="#1397fe" stroke="#1397fe" stroke-width="1.1" stroke-linejoin="round"/>
<polygon points="1082.45,303.15 1082.34,306.76 1103.25,298.11 1103.43,294.57" fill="#0c62a5" stroke="#0c62a5" stroke-width="1.1" stroke-linejoin="round"/>
<polygon points="1112.97,376.86 1112.24,379.26 1115.34,380.92 1115.71,379.32" fill="#0a4c7f" stroke="#0a4c7f" stroke-width="1.1" stroke-linejoin="round"/>
<polygon points="1082.41,310.44 1074.86,306.95 1075.18,311.34 1082.66,314.18" fill="#0a4c7f" stroke="#0a4c7f" stroke-width="1.1" stroke-linejoin="round"/>
<polygon points="1124.25,385.56 1127.18,387.24 1147.05,376.46 1144.13,374.87" fill="#1397fe" stroke="#1397fe" stroke-width="1.1" stroke-linejoin="round"/>
<polygon points="1082.74,299.63 1082.45,303.15 1103.43,294.57 1103.79,291.10" fill="#0c5fa0" stroke="#0c5fa0" stroke-width="1.1" stroke-linejoin="round"/>
<polygon points="1115.71,379.32 1115.34,380.92 1118.35,382.53 1118.51,381.59" fill="#0a4c7f" stroke="#0a4c7f" stroke-width="1.1" stroke-linejoin="round"/>
<polygon points="1082.34,306.76 1074.75,302.63 1074.86,306.95 1082.41,310.44" fill="#0a4c7f" stroke="#0a4c7f" stroke-width="1.1" stroke-linejoin="round"/>
<polygon points="1127.18,387.24 1130.13,388.69 1150.00,377.84 1147.05,376.46" fill="#1397fe" stroke="#1397fe" stroke-width="1.1" stroke-linejoin="round"/>
<polygon points="1083.21,296.20 1082.74,299.63 1103.79,291.10 1104.34,287.74" fill="#0c5c9a" stroke="#0c5c9a" stroke-width="1.1" stroke-linejoin="round"/>
<polygon points="1118.51,381.59 1118.35,382.53 1121.32,384.11 1121.36,383.68" fill="#0a4c7f" stroke="#0a4c7f" stroke-width="1.1" stroke-linejoin="round"/>
<polygon points="1082.45,303.15 1074.85,298.39 1074.75,302.63 1082.34,306.76" fill="#0a4c7f" stroke="#0a4c7f" stroke-width="1.1" stroke-linejoin="round"/>
<polygon points="1130.13,388.69 1133.08,389.92 1152.96,379.00 1150.00,377.84" fill="#1397fe" stroke="#1397fe" stroke-width="1.1" stroke-linejoin="round"/>
<polygon points="1083.87,292.90 1083.21,296.20 1104.34,287.74 1105.06,284.49" fill="#0b5995" stroke="#0b5995" stroke-width="1.1" stroke-linejoin="round"/>
<polygon points="1121.36,383.68 1121.32,384.11 1124.25,385.67 1124.25,385.56" fill="#0a4c7f" stroke="#0a4c7f" stroke-width="1.1" stroke-linejoin="round"/>
<polygon points="1082.74,299.63 1075.16,294.24 1074.85,298.39 1082.45,303.15" fill="#0a4c7f" stroke="#0a4c7f" stroke-width="1.1" stroke-linejoin="round"/>
<polygon points="1133.08,389.92 1136.04,390.92 1155.92,379.92 1152.96,379.00" fill="#1397fd" stroke="#1397fd" stroke-width="1.1" stroke-linejoin="round"/>
<polygon points="1124.25,385.56 1124.25,385.67 1127.18,387.24 1127.18,387.24" fill="#0a4c7f" stroke="#0a4c7f" stroke-width="1.1" stroke-linejoin="round"/>
<polygon points="1084.71,289.72 1083.87,292.90 1105.06,284.49 1105.97,281.36" fill="#0b5690" stroke="#0b5690" stroke-width="1.1" stroke-linejoin="round"/>
<polygon points="1083.21,296.20 1075.68,290.20 1075.16,294.24 1082.74,299.63" fill="#0a4c7f" stroke="#0a4c7f" stroke-width="1.1" stroke-linejoin="round"/>
<polygon points="1136.04,390.92 1138.98,391.68 1158.87,380.62 1155.92,379.92" fill="#1396fc" stroke="#1396fc" stroke-width="1.1" stroke-linejoin="round"/>
<polygon points="1127.18,387.24 1127.18,387.24 1130.13,388.81 1130.13,388.69" fill="#0a4c7f" stroke="#0a4c7f" stroke-width="1.1" stroke-linejoin="round"/>
<polygon points="1085.74,286.69 1084.71,289.72 1105.97,281.36 1107.06,278.37" fill="#0a538b" stroke="#0a538b" stroke-width="1.1" stroke-linejoin="round"/>
<polygon points="1083.87,292.90 1076.41,286.30 1075.68,290.20 1083.21,296.20" fill="#0a4c7f" stroke="#0a4c7f" stroke-width="1.1" stroke-linejoin="round"/>
<polygon points="1138.98,391.68 1141.90,392.19 1161.80,381.07 1158.87,380.62" fill="#1395fb" stroke="#1395fb" stroke-width="1.1" stroke-linejoin="round"/>
<polygon points="1130.13,388.69 1130.13,388.81 1133.13,390.41 1133.08,389.92" fill="#0a4c7f" stroke="#0a4c7f" stroke-width="1.1" stroke-linejoin="round"/>
<polygon points="1086.94,283.81 1085.74,286.69 1107.06,278.37 1108.33,275.53" fill="#0a5086" stroke="#0a5086" stroke-width="1.1" stroke-linejoin="round"/>
<polygon points="1084.71,289.72 1077.36,282.53 1076.41,286.30 1083.87,292.90" fill="#0a4c7f" stroke="#0a4c7f" stroke-width="1.1" stroke-linejoin="round"/>
<polygon points="1133.08,389.92 1133.13,390.41 1136.21,392.05 1136.04,390.92" fill="#0a4c7f" stroke="#0a4c7f" stroke-width="1.1" stroke-linejoin="round"/>
<polygon points="1141.90,392.19 1144.78,392.45 1164.70,381.27 1161.80,381.07" fill="#1394f9" stroke="#1394f9" stroke-width="1.1" stroke-linejoin="round"/>
<polygon points="1088.33,281.11 1086.94,283.81 1108.33,275.53 1109.78,272.86" fill="#0a4d82" stroke="#0a4d82" stroke-width="1.1" stroke-linejoin="round"/>
<polygon points="1085.74,286.69 1078.53,278.93 1077.36,282.53 1084.71,289.72" fill="#0a4c7f" stroke="#0a4c7f" stroke-width="1.1" stroke-linejoin="round"/>
<polygon points="1136.04,390.92 1136.21,392.05 1139.39,393.75 1138.98,391.68" fill="#0a4c7f" stroke="#0a4c7f" stroke-width="1.1" stroke-linejoin="round"/>
<polygon points="1144.78,392.45 1147.62,392.46 1167.55,381.22 1164.70,381.27" fill="#1393f7" stroke="#1393f7" stroke-width="1.1" stroke-linejoin="round"/>
<polygon points="1089.89,278.58 1088.33,281.11 1109.78,272.86 1111.40,270.36" fill="#094b7d" stroke="#094b7d" stroke-width="1.1" stroke-linejoin="round"/>
<polygon points="1086.94,283.81 1079.91,275.50 1078.53,278.93 1085.74,286.69" fill="#0a4c7f" stroke="#0a4c7f" stroke-width="1.1" stroke-linejoin="round"/>
<polygon points="1138.98,391.68 1139.39,393.75 1142.71,395.52 1141.90,392.19" fill="#0a4c7f" stroke="#0a4c7f" stroke-width="1.1" stroke-linejoin="round"/>
<polygon points="1147.62,392.46 1150.39,392.20 1170.35,380.92 1167.55,381.22" fill="#1392f5" stroke="#1392f5" stroke-width="1.1" stroke-linejoin="round"/>
<polygon points="1091.62,276.26 1089.89,278.58 1111.40,270.36 1113.19,268.06" fill="#094879" stroke="#094879" stroke-width="1.1" stroke-linejoin="round"/>
<polygon points="1141.90,392.19 1142.71,395.52 1146.22,397.39 1144.78,392.45" fill="#0a4c7f" stroke="#0a4c7f" stroke-width="1.1" stroke-linejoin="round"/>
<polygon points="1088.33,281.11 1081.50,272.27 1079.91,275.50 1086.94,283.81" fill="#0a4c7f" stroke="#0a4c7f" stroke-width="1.1" stroke-linejoin="round"/>
<polygon points="1150.39,392.20 1153.10,391.69 1173.08,380.36 1170.35,380.92" fill="#1390f2" stroke="#1390f2" stroke-width="1.1" stroke-linejoin="round"/>
<polygon points="1093.52,274.14 1091.62,276.26 1113.19,268.06 1115.15,265.96" fill="#094675" stroke="#094675" stroke-width="1.1" stroke-linejoin="round"/>
<polygon points="1144.78,392.45 1146.22,397.39 1149.95,399.38 1147.62,392.46" fill="#0a4c7f" stroke="#0a4c7f" stroke-width="1.1" stroke-linejoin="round"/>
<polygon points="1089.89,278.58 1083.29,269.25 1081.50,272.27 1088.33,281.11" fill="#0a4c7f" stroke="#0a4c7f" stroke-width="1.1" stroke-linejoin="round"/>
<polygon points="1153.10,391.69 1155.72,390.91 1175.73,379.54 1173.08,380.36" fill="#128eef" stroke="#128eef" stroke-width="1.1" stroke-linejoin="round"/>
<polygon points="1095.58,272.25 1093.52,274.14 1115.15,265.96 1117.26,264.07" fill="#084371" stroke="#084371" stroke-width="1.1" stroke-linejoin="round"/>
<polygon points="1147.62,392.46 1149.95,399.38 1153.98,401.53 1150.39,392.20" fill="#0a4c7f" stroke="#0a4c7f" stroke-width="1.1" stroke-linejoin="round"/>
<polygon points="1091.62,276.26 1085.30,266.45 1083.29,269.25 1089.89,278.58" fill="#0a4c7f" stroke="#0a4c7f" stroke-width="1.1" stroke-linejoin="round"/>
<polygon points="1155.72,390.91 1158.24,389.86 1178.29,378.47 1175.73,379.54" fill="#128cec" stroke="#128cec" stroke-width="1.1" stroke-linejoin="round"/>
<polygon points="1097.79,270.58 1095.58,272.25 1117.26,264.07 1119.53,262.41" fill="#08416e" stroke="#08416e" stroke-width="1.1" stroke-linejoin="round"/>
<polygon points="1150.39,392.20 1153.98,401.53 1156.45,402.85 1157.82,402.62 1153.10,391.69" fill="#0a4c7f" stroke="#0a4c7f" stroke-width="1.1" stroke-linejoin="round"/>
<polygon points="1093.52,274.14 1087.50,263.89 1085.30,266.45 1091.62,276.26" fill="#0a4c7f" stroke="#0a4c7f" stroke-width="1.1" stroke-linejoin="round"/>
<polygon points="1158.24,389.86 1160.65,388.55 1180.74,377.14 1178.29,378.47" fill="#128ae8" stroke="#128ae8" stroke-width="1.1" stroke-linejoin="round"/>
<polygon points="1100.16,269.16 1097.79,270.58 1119.53,262.41 1121.94,260.99" fill="#083f6b" stroke="#083f6b" stroke-width="1.1" stroke-linejoin="round"/>
<polygon points="1153.10,391.69 1157.82,402.62 1160.94,401.76 1155.72,390.91" fill="#0a4c7f" stroke="#0a4c7f" stroke-width="1.1" stroke-linejoin="round"/>
<polygon points="1095.58,272.25 1089.90,261.59 1087.50,263.89 1093.52,274.14" fill="#0a4c7f" stroke="#0a4c7f" stroke-width="1.1" stroke-linejoin="round"/>
<polygon points="1166.85,399.10 1169.60,397.30 1189.58,385.57 1186.78,387.39" fill="#107cd1" stroke="#107cd1" stroke-width="1.1" stroke-linejoin="round"/>
<polygon points="1102.67,268.00 1100.16,269.16 1121.94,260.99 1124.48,259.81" fill="#083e68" stroke="#083e68" stroke-width="1.1" stroke-linejoin="round"/>
<polygon points="1155.72,390.91 1160.94,401.76 1163.96,400.59 1158.24,389.86" fill="#0a4c7f" stroke="#0a4c7f" stroke-width="1.1" stroke-linejoin="round"/>
<polygon points="1097.79,270.58 1092.49,259.56 1089.90,261.59 1095.58,272.25" fill="#0a4c7f" stroke="#0a4c7f" stroke-width="1.1" stroke-linejoin="round"/>
<polygon points="1169.60,397.30 1172.20,395.19 1192.23,383.44 1189.58,385.57" fill="#107ed4" stroke="#107ed4" stroke-width="1.1" stroke-linejoin="round"/>
<polygon points="1158.24,389.86 1163.96,400.59 1166.85,399.10 1160.65,388.55" fill="#0a4c7f" stroke="#0a4c7f" stroke-width="1.1" stroke-linejoin="round"/>
<polygon points="1100.16,269.16 1095.25,257.81 1092.49,259.56 1097.79,270.58" fill="#0a4c7f" stroke="#0a4c7f" stroke-width="1.1" stroke-linejoin="round"/>
<polygon points="1172.20,395.19 1174.63,392.77 1194.71,381.02 1192.23,383.44" fill="#1080d7" stroke="#1080d7" stroke-width="1.1" stroke-linejoin="round"/>
<polygon points="1160.65,388.55 1166.85,399.10 1169.60,397.30 1162.95,386.98" fill="#0a4c7f" stroke="#0a4c7f" stroke-width="1.1" stroke-linejoin="round"/>
<polygon points="1104.55,254.39 1101.29,255.22 1123.33,247.32 1126.62,246.47" fill="#128ff1" stroke="#128ff1" stroke-width="1.1" stroke-linejoin="round"/>
<polygon points="1102.67,268.00 1098.19,256.36 1095.25,257.81 1100.16,269.16" fill="#0a4c7f" stroke="#0a4c7f" stroke-width="1.1" stroke-linejoin="round"/>
<polygon points="1174.63,392.77 1176.89,390.05 1197.02,378.31 1194.71,381.02" fill="#1182da" stroke="#1182da" stroke-width="1.1" stroke-linejoin="round"/>
<polygon points="1162.95,386.98 1169.60,397.30 1172.20,395.19 1165.11,385.14" fill="#0a4c7f" stroke="#0a4c7f" stroke-width="1.1" stroke-linejoin="round"/>
<polygon points="1107.93,253.90 1104.55,254.39 1126.62,246.47 1130.05,245.95" fill="#1391f3" stroke="#1391f3" stroke-width="1.1" stroke-linejoin="round"/>
<polygon points="1105.30,267.09 1101.29,255.22 1098.19,256.36 1102.67,268.00" fill="#0a4c7f" stroke="#0a4c7f" stroke-width="1.1" stroke-linejoin="round"/>
<polygon points="1176.89,390.05 1178.94,387.03 1199.13,375.31 1197.02,378.31" fill="#1183dd" stroke="#1183dd" stroke-width="1.1" stroke-linejoin="round"/>
<polygon points="1165.11,385.14 1172.20,395.19 1174.63,392.77 1167.12,383.05" fill="#0a4c7f" stroke="#0a4c7f" stroke-width="1.1" stroke-linejoin="round"/>
<polygon points="1111.45,253.75 1107.93,253.90 1130.05,245.95 1133.59,245.75" fill="#1392f5" stroke="#1392f5" stroke-width="1.1" stroke-linejoin="round"/>
<polygon points="1108.06,266.46 1104.55,254.39 1101.29,255.22 1105.30,267.09" fill="#0a4c7f" stroke="#0a4c7f" stroke-width="1.1" stroke-linejoin="round"/>
<polygon points="1178.94,387.03 1180.79,383.73 1201.04,372.03 1199.13,375.31" fill="#1185e0" stroke="#1185e0" stroke-width="1.1" stroke-linejoin="round"/>
<polygon points="1167.12,383.05 1174.63,392.77 1176.89,390.05 1168.98,380.71" fill="#0a4c7f" stroke="#0a4c7f" stroke-width="1.1" stroke-linejoin="round"/>
<polygon points="1115.07,253.94 1111.45,253.75 1133.59,245.75 1137.23,245.89" fill="#1393f8" stroke="#1393f8" stroke-width="1.1" stroke-linejoin="round"/>
<polygon points="1110.93,266.11 1107.93,253.90 1104.55,254.39 1108.06,266.46" fill="#0a4c7f" stroke="#0a4c7f" stroke-width="1.1" stroke-linejoin="round"/>
<polygon points="1180.79,383.73 1182.41,380.15 1202.73,368.49 1201.04,372.03" fill="#1187e3" stroke="#1187e3" stroke-width="1.1" stroke-linejoin="round"/>
<polygon points="1168.98,380.71 1176.89,390.05 1178.94,387.03 1170.67,378.12" fill="#0a4c7f" stroke="#0a4c7f" stroke-width="1.1" stroke-linejoin="round"/>
<polygon points="1118.79,254.47 1115.07,253.94 1137.23,245.89 1140.96,246.37" fill="#1395fa" stroke="#1395fa" stroke-width="1.1" stroke-linejoin="round"/>
<polygon points="1113.90,266.04 1111.45,253.75 1107.93,253.90 1110.93,266.11" fill="#0a4c7f" stroke="#0a4c7f" stroke-width="1.1" stroke-linejoin="round"/>
<polygon points="1182.41,380.15 1183.80,376.31 1204.18,364.70 1202.73,368.49" fill="#1289e6" stroke="#1289e6" stroke-width="1.1" stroke-linejoin="round"/>
<polygon points="1170.67,378.12 1178.94,387.03 1180.79,383.73 1172.18,375.30" fill="#0a4c7f" stroke="#0a4c7f" stroke-width="1.1" stroke-linejoin="round"/>
<polygon points="1122.58,255.37 1118.79,254.47 1140.96,246.37 1144.76,247.20" fill="#1396fc" stroke="#1396fc" stroke-width="1.1" stroke-linejoin="round"/>
<polygon points="1116.96,266.25 1115.07,253.94 1111.45,253.75 1113.90,266.04" fill="#0a4c7f" stroke="#0a4c7f" stroke-width="1.1" stroke-linejoin="round"/>
<polygon points="1183.80,376.31 1184.95,372.22 1205.40,360.67 1204.18,364.70" fill="#128ae8" stroke="#128ae8" stroke-width="1.1" stroke-linejoin="round"/>
<polygon points="1172.18,375.30 1180.79,383.73 1182.41,380.15 1173.50,372.26" fill="#0a4c7f" stroke="#0a4c7f" stroke-width="1.1" stroke-linejoin="round"/>
<polygon points="1126.44,256.61 1122.58,255.37 1144.76,247.20 1148.61,248.37" fill="#1397fe" stroke="#1397fe" stroke-width="1.1" stroke-linejoin="round"/>
<polygon points="1120.09,266.76 1118.79,254.47 1115.07,253.94 1116.96,266.25" fill="#0a4c7f" stroke="#0a4c7f" stroke-width="1.1" stroke-linejoin="round"/>
<polygon points="1184.95,372.22 1185.85,367.90 1206.37,356.42 1205.40,360.67" fill="#128ceb" stroke="#128ceb" stroke-width="1.1" stroke-linejoin="round"/>
<polygon points="1173.50,372.26 1182.41,380.15 1183.80,376.31 1174.63,369.00" fill="#0a4c7f" stroke="#0a4c7f" stroke-width="1.1" stroke-linejoin="round"/>
<polygon points="1130.33,258.21 1126.44,256.61 1148.61,248.37 1152.50,249.88" fill="#1498ff" stroke="#1498ff" stroke-width="1.1" stroke-linejoin="round"/>
<polygon points="1123.27,267.57 1122.58,255.37 1118.79,254.47 1120.09,266.76" fill="#0a4c7f" stroke="#0a4c7f" stroke-width="1.1" stroke-linejoin="round"/>
<polygon points="1185.85,367.90 1186.48,363.37 1207.07,351.97 1206.37,356.42" fill="#128eee" stroke="#128eee" stroke-width="1.1" stroke-linejoin="round"/>
<polygon points="1174.63,369.00 1183.80,376.31 1184.95,372.22 1175.55,365.54" fill="#0a4c7f" stroke="#0a4c7f" stroke-width="1.1" stroke-linejoin="round"/>
<polygon points="1134.25,260.16 1130.33,258.21 1152.50,249.88 1156.40,251.73" fill="#1499ff" stroke="#1499ff" stroke-width="1.1" stroke-linejoin="round"/>
<polygon points="1126.51,268.66 1126.44,256.61 1122.58,255.37 1123.27,267.57" fill="#0a4c7f" stroke="#0a4c7f" stroke-width="1.1" stroke-linejoin="round"/>
<polygon points="1186.48,363.37 1186.84,358.65 1207.51,347.34 1207.07,351.97" fill="#128ff0" stroke="#128ff0" stroke-width="1.1" stroke-linejoin="round"/>
<polygon points="1175.55,365.54 1184.95,372.22 1185.85,367.90 1176.26,361.90" fill="#0a4c7f" stroke="#0a4c7f" stroke-width="1.1" stroke-linejoin="round"/>
<polygon points="1138.16,262.45 1134.25,260.16 1156.40,251.73 1160.29,253.92" fill="#149aff" stroke="#149aff" stroke-width="1.1" stroke-linejoin="round"/>
<polygon points="1129.77,270.05 1130.33,258.21 1126.44,256.61 1126.51,268.66" fill="#0a4c7f" stroke="#0a4c7f" stroke-width="1.1" stroke-linejoin="round"/>
<polygon points="1186.84,358.65 1186.93,353.77 1207.68,342.55 1207.51,347.34" fill="#1391f3" stroke="#1391f3" stroke-width="1.1" stroke-linejoin="round"/>
<polygon points="1176.26,361.90 1185.85,367.90 1186.48,363.37 1176.75,358.09" fill="#0a4c7f" stroke="#0a4c7f" stroke-width="1.1" stroke-linejoin="round"/>
<polygon points="1142.06,265.08 1138.16,262.45 1160.29,253.92 1164.15,256.44" fill="#149aff" stroke="#149aff" stroke-width="1.1" stroke-linejoin="round"/>
<polygon points="1133.04,271.72 1134.25,260.16 1130.33,258.21 1129.77,270.05" fill="#0a4c7f" stroke="#0a4c7f" stroke-width="1.1" stroke-linejoin="round"/>
<polygon points="1186.93,353.77 1186.74,348.73 1207.57,337.62 1207.68,342.55" fill="#1392f5" stroke="#1392f5" stroke-width="1.1" stroke-linejoin="round"/>
<polygon points="1176.75,358.09 1186.48,363.37 1186.84,358.65 1177.02,354.12" fill="#0a4c7f" stroke="#0a4c7f" stroke-width="1.1" stroke-linejoin="round"/>
<polygon points="1145.91,268.03 1142.06,265.08 1164.15,256.44 1167.97,259.28" fill="#149bff" stroke="#149bff" stroke-width="1.1" stroke-linejoin="round"/>
<polygon points="1136.31,273.68 1138.16,262.45 1134.25,260.16 1133.04,271.72" fill="#0a4c7f" stroke="#0a4c7f" stroke-width="1.1" stroke-linejoin="round"/>
<polygon points="1186.74,348.73 1186.27,343.58 1207.18,332.59 1207.57,337.62" fill="#1393f8" stroke="#1393f8" stroke-width="1.1" stroke-linejoin="round"/>
<polygon points="1149.70,271.30 1145.91,268.03 1167.97,259.28 1171.72,262.42" fill="#149bff" stroke="#149bff" stroke-width="1.1" stroke-linejoin="round"/>
<polygon points="1177.02,354.12 1186.84,358.65 1186.93,353.77 1177.06,350.02" fill="#0a4c7f" stroke="#0a4c7f" stroke-width="1.1" stroke-linejoin="round"/>
<polygon points="1139.56,275.91 1142.06,265.08 1138.16,262.45 1136.31,273.68" fill="#0a4c7f" stroke="#0a4c7f" stroke-width="1.1" stroke-linejoin="round"/>
<polygon points="1186.27,343.58 1185.51,338.34 1206.52,327.47 1207.18,332.59" fill="#1395fa" stroke="#1395fa" stroke-width="1.1" stroke-linejoin="round"/>
<polygon points="1153.41,274.87 1149.70,271.30 1171.72,262.42 1175.38,265.86" fill="#149cff" stroke="#149cff" stroke-width="1.1" stroke-linejoin="round"/>
<polygon points="1177.06,350.02 1186.93,353.77 1186.74,348.73 1176.87,345.80" fill="#0a4c7f" stroke="#0a4c7f" stroke-width="1.1" stroke-linejoin="round"/>
<polygon points="1185.51,338.34 1184.48,333.03 1205.57,322.29 1206.52,327.47" fill="#1396fc" stroke="#1396fc" stroke-width="1.1" stroke-linejoin="round"/>
<polygon points="1142.77,278.41 1145.91,268.03 1142.06,265.08 1139.56,275.91" fill="#0a4c7f" stroke="#0a4c7f" stroke-width="1.1" stroke-linejoin="round"/>
<polygon points="1157.01,278.72 1153.41,274.87 1175.38,265.86 1178.93,269.58" fill="#149cff" stroke="#149cff" stroke-width="1.1" stroke-linejoin="round"/>
<polygon points="1184.48,333.03 1183.18,327.69 1204.35,317.08 1205.57,322.29" fill="#1397fe" stroke="#1397fe" stroke-width="1.1" stroke-linejoin="round"/>
<polygon points="1176.87,345.80 1186.74,348.73 1186.27,343.58 1176.45,341.50" fill="#0a4c7f" stroke="#0a4c7f" stroke-width="1.1" stroke-linejoin="round"/>
<polygon points="1160.49,282.83 1157.01,278.72 1178.93,269.58 1182.35,273.55" fill="#149cff" stroke="#149cff" stroke-width="1.1" stroke-linejoin="round"/>
<polygon points="1145.92,281.17 1149.70,271.30 1145.91,268.03 1142.77,278.41" fill="#0a4c7f" stroke="#0a4c7f" stroke-width="1.1" stroke-linejoin="round"/>
<polygon points="1183.18,327.69 1181.60,322.34 1202.85,311.87 1204.35,317.08" fill="#1498ff" stroke="#1498ff" stroke-width="1.1" stroke-linejoin="round"/>
<polygon points="1163.82,287.19 1160.49,282.83 1182.35,273.55 1185.62,277.76" fill="#149cff" stroke="#149cff" stroke-width="1.1" stroke-linejoin="round"/>
<polygon points="1176.45,341.50 1186.27,343.58 1185.51,338.34 1175.80,337.12" fill="#0a4c7f" stroke="#0a4c7f" stroke-width="1.1" stroke-linejoin="round"/>
<polygon points="1181.60,322.34 1179.76,317.01 1201.09,306.69 1202.85,311.87" fill="#1499ff" stroke="#1499ff" stroke-width="1.1" stroke-linejoin="round"/>
<polygon points="1149.01,284.17 1153.41,274.87 1149.70,271.30 1145.92,281.17" fill="#0a4c7f" stroke="#0a4c7f" stroke-width="1.1" stroke-linejoin="round"/>
<polygon points="1166.99,291.76 1163.82,287.19 1185.62,277.76 1188.72,282.19" fill="#149cff" stroke="#149cff" stroke-width="1.1" stroke-linejoin="round"/>
<polygon points="1179.76,317.01 1177.66,311.74 1199.08,301.56 1201.09,306.69" fill="#149aff" stroke="#149aff" stroke-width="1.1" stroke-linejoin="round"/>
<polygon points="1169.97,296.53 1166.99,291.76 1188.72,282.19 1191.63,286.81" fill="#149cff" stroke="#149cff" stroke-width="1.1" stroke-linejoin="round"/>
<polygon points="1177.66,311.74 1175.32,306.55 1196.83,296.52 1199.08,301.56" fill="#149aff" stroke="#149aff" stroke-width="1.1" stroke-linejoin="round"/>
<polygon points="1175.80,337.12 1185.51,338.34 1184.48,333.03 1174.91,332.69" fill="#0a4c7f" stroke="#0a4c7f" stroke-width="1.1" stroke-linejoin="round"/>
<polygon points="1172.76,301.47 1169.97,296.53 1191.63,286.81 1194.34,291.60" fill="#149bff" stroke="#149bff" stroke-width="1.1" stroke-linejoin="round"/>
<polygon points="1175.32,306.55 1172.76,301.47 1194.34,291.60 1196.83,296.52" fill="#149bff" stroke="#149bff" stroke-width="1.1" stroke-linejoin="round"/>
<polygon points="1152.00,287.40 1157.01,278.72 1153.41,274.87 1149.01,284.17" fill="#0a4c7f" stroke="#0a4c7f" stroke-width="1.1" stroke-linejoin="round"/>
<polygon points="1174.91,332.69 1184.48,333.03 1183.18,327.69 1173.81,328.23" fill="#0a4c7f" stroke="#0a4c7f" stroke-width="1.1" stroke-linejoin="round"/>
<polygon points="1154.89,290.84 1160.49,282.83 1157.01,278.72 1152.00,287.40" fill="#0a4c7f" stroke="#0a4c7f" stroke-width="1.1" stroke-linejoin="round"/>
<polygon points="1173.81,328.23 1183.18,327.69 1181.60,322.34 1172.48,323.77" fill="#0a4c7f" stroke="#0a4c7f" stroke-width="1.1" stroke-linejoin="round"/>
<polygon points="1157.66,294.49 1163.82,287.19 1160.49,282.83 1154.89,290.84" fill="#0a4c7f" stroke="#0a4c7f" stroke-width="1.1" stroke-linejoin="round"/>
<polygon points="1172.48,323.77 1181.60,322.34 1179.76,317.01 1170.93,319.34" fill="#0a4c7f" stroke="#0a4c7f" stroke-width="1.1" stroke-linejoin="round"/>
<polygon points="1160.29,298.30 1166.99,291.76 1163.82,287.19 1157.66,294.49" fill="#0a4c7f" stroke="#0a4c7f" stroke-width="1.1" stroke-linejoin="round"/>
<polygon points="1170.93,319.34 1179.76,317.01 1177.66,311.74 1169.18,314.95" fill="#0a4c7f" stroke="#0a4c7f" stroke-width="1.1" stroke-linejoin="round"/>
<polygon points="1162.77,302.28 1169.97,296.53 1166.99,291.76 1160.29,298.30" fill="#0a4c7f" stroke="#0a4c7f" stroke-width="1.1" stroke-linejoin="round"/>
<polygon points="1169.18,314.95 1177.66,311.74 1175.32,306.55 1167.23,310.63" fill="#0a4c7f" stroke="#0a4c7f" stroke-width="1.1" stroke-linejoin="round"/>
<polygon points="1165.09,306.40 1172.76,301.47 1169.97,296.53 1162.77,302.28" fill="#0a4c7f" stroke="#0a4c7f" stroke-width="1.1" stroke-linejoin="round"/>
<polygon points="1167.23,310.63 1175.32,306.55 1172.76,301.47 1165.09,306.40" fill="#0a4c7f" stroke="#0a4c7f" stroke-width="1.1" stroke-linejoin="round"/>
<line x1="1137.37" y1="346.92" x2="1158.02" y2="-5740.60" stroke="#22227a" stroke-width="1"/>
<line x1="1137.25" y1="381.78" x2="1137.37" y2="346.92" stroke="#22227a" stroke-width="1" stroke-dasharray="1.5,1.5"/>
<line x1="1136.97" y1="461.98" x2="1135.47" y2="905.59" stroke="#22227a" stroke-width="1" stroke-dasharray="3,2"/>
<path d="M1134.3,355.3L1140.3,358.9M1134.3,358.9L1140.3,355.3" stroke="#999" stroke-width="0.8"/>
<path d="M1134.5,302.5L1140.5,306.1M1134.5,306.1L1140.5,302.5" stroke="#999" stroke-width="0.8"/>
<path d="M1134.7,244.6L1140.7,248.2M1134.7,248.2L1140.7,244.6" stroke="#999" stroke-width="0.8"/>
<path d="M1134.9,180.7L1140.9,184.3M1134.9,184.3L1140.9,180.7" stroke="#999" stroke-width="0.8"/>
<path d="M1135.2,110.0L1141.2,113.6M1135.2,113.6L1141.2,110.0" stroke="#999" stroke-width="0.8"/>
<path d="M1133.9,488.9L1139.9,492.5M1133.9,492.5L1139.9,488.9" stroke="#999" stroke-width="0.8"/>
<path d="M1133.7,526.7L1139.7,530.3M1133.7,530.3L1139.7,526.7" stroke="#999" stroke-width="0.8"/>
<path d="M1133.6,561.8L1139.6,565.4M1133.6,565.4L1139.6,561.8" stroke="#999" stroke-width="0.8"/>
<path d="M1133.5,594.4L1139.5,598.0M1133.5,598.0L1139.5,594.4" stroke="#999" stroke-width="0.8"/>
<path d="M1133.4,624.8L1139.4,628.4M1133.4,628.4L1139.4,624.8" stroke="#999" stroke-width="0.8"/>
</svg>
<rect x="910" y="641" width="456" height="127" fill="#fff"/>
<rect x="910" y="641" width="456" height="1" fill="#cfcfcf"/>
<rect x="910" y="675.3" width="456" height="1" fill="#d8d8d8"/>
<rect x="910" y="709.3" width="456" height="1" fill="#d8d8d8"/>
<rect x="910" y="641" width="1" height="127" fill="#cfcfcf"/>
<rect x="1365" y="641" width="1" height="127" fill="#d8d8d8"/>
<rect x="911.9" y="642.9" width="31.9" height="31.9" rx="4" fill="url(#btn2)" stroke="#cfcfcf" stroke-width="1"/>
<rect x="916.6" y="647.5" width="23" height="23" fill="#1a90ff" stroke="#2a3a50" stroke-width="1"/>
<rect x="950.0" y="642.9" width="31.6" height="31.9" rx="4" fill="url(#btn2)" stroke="#cfcfcf" stroke-width="1"/>
<path d="M962,646.7V661.4H977M962,661.4L953.3,670" stroke="#777" stroke-width="1.2" fill="none"/>
<rect x="989.5" y="642.9" width="31.8" height="32" rx="3" fill="#dcdcdc" stroke="#9a9a9a" stroke-width="1"/>
<rect x="1021.8" y="642.9" width="31.9" height="31.9" rx="4" fill="url(#btn2)" stroke="#cfcfcf" stroke-width="1"/>
<g stroke="#777" stroke-width="1.2" fill="none"><circle cx="1004.9" cy="658.8" r="12"/><path d="M998.2,658.8H1011.6M1004.9,652.1V665.5"/><circle cx="1038" cy="658.8" r="12"/><path d="M1031.3,658.8H1044.7"/></g>
<rect x="1060.4" y="642.9" width="31.5" height="32.4" rx="4" fill="url(#btn2)" stroke="#cfcfcf" stroke-width="1"/>
<g stroke="#777" stroke-width="1.2" fill="none"><circle cx="1075.9" cy="658.8" r="8.5"/><path d="M1075.9,646.5V650.5M1075.9,667V671M1063.6,658.8H1067.6M1084.2,658.8H1088.2"/></g><circle cx="1075.9" cy="658.8" r="3.2" fill="#777"/>
<rect x="1092.9" y="643.3" width="86.2" height="32.0" rx="4" fill="url(#btn2)" stroke="#cfcfcf" stroke-width="1"/>
<text x="1098.00" y="662.8" font-size="14.3" fill="#333" font-weight="normal" font-family="Liberation Sans" textLength="58.22" lengthAdjust="spacingAndGlyphs">diagonal</text>
<path d="M1166.2,658.5L1170,662.2L1173.8,658.5" stroke="#333" stroke-width="1.5" fill="none"/>
<rect x="1186.0" y="643.3" width="31.9" height="32.0" rx="4" fill="url(#btn2)" stroke="#cfcfcf" stroke-width="1"/>
<path d="M1192,653 H1196 L1198,649.2 H1205.5 L1207.5,653 H1211.3 V668.5 H1191.6 Z" fill="none" stroke="#000" stroke-width="1.5" stroke-linejoin="round"/><circle cx="1201.5" cy="660.3" r="4.6" fill="none" stroke="#000" stroke-width="1.4"/><circle cx="1201.5" cy="660.3" r="2.4" fill="#000"/><rect x="1193" y="650.5" width="2" height="1.5" fill="#000"/>
<rect x="912.4" y="677.9" width="322.5" height="31.8" rx="4" fill="url(#btn2)" stroke="#d0d0d0" stroke-width="1"/>
<text x="935.30" y="696.7" font-size="14.3" fill="#333" font-weight="normal" font-family="Liberation Sans" textLength="57.49" lengthAdjust="spacingAndGlyphs">Smooth:</text>
<circle cx="1013.8" cy="694.5" r="5.9" fill="#fff" stroke="#7a7a86" stroke-width="1.7"/>
<text x="1027.50" y="697.6" font-size="14.3" fill="#333" font-weight="normal" font-family="Liberation Sans" textLength="26.69" lengthAdjust="spacingAndGlyphs">Low</text>
<circle cx="1075.9" cy="694.5" r="6.2" fill="#fff" stroke="#1a73e8" stroke-width="1.6"/><circle cx="1075.9" cy="694.5" r="3.4" fill="#1a73e8"/>
<text x="1090.00" y="697.6" font-size="14.3" fill="#333" font-weight="normal" font-family="Liberation Sans" textLength="54.73" lengthAdjust="spacingAndGlyphs">Medium</text>
<circle cx="1166.9" cy="694.7" r="5.9" fill="#fff" stroke="#7a7a86" stroke-width="1.7"/>
<text x="1180.20" y="697.6" font-size="14.3" fill="#333" font-weight="normal" font-family="Liberation Sans" textLength="30.73" lengthAdjust="spacingAndGlyphs">High</text>
<rect x="916.9" y="714.1" width="100.4" height="49.6" rx="5" fill="url(#btn)" stroke="#c4c4c4" stroke-width="1"/>
<text x="935.70" y="745.0" font-size="18.3" fill="#333" font-weight="normal" font-family="Liberation Sans" textLength="62.80" lengthAdjust="spacingAndGlyphs">Render</text>
<rect x="1076.6" y="724.6" width="121.4" height="23.7" rx="3" fill="#e9e9ed" stroke="#8f8f9d" stroke-width="1"/>
<text x="1086.30" y="740.8" font-size="14.3" fill="#222" font-weight="normal" font-family="Liberation Sans" textLength="83.81" lengthAdjust="spacingAndGlyphs">STL (Binary)</text>
<path d="M1184.6,735L1188.2,738.6L1191.8,735" stroke="#222" stroke-width="1.5" fill="none"/>
<rect x="1204.8" y="715.9" width="154.4" height="43.9" rx="5" fill="url(#btn)" stroke="#c4c4c4" stroke-width="1"/>
<text x="1221.20" y="744.0" font-size="18.3" fill="#333" font-weight="normal" font-family="Liberation Sans" textLength="121.43" lengthAdjust="spacingAndGlyphs">Generate STL</text>
</svg></body></html>
